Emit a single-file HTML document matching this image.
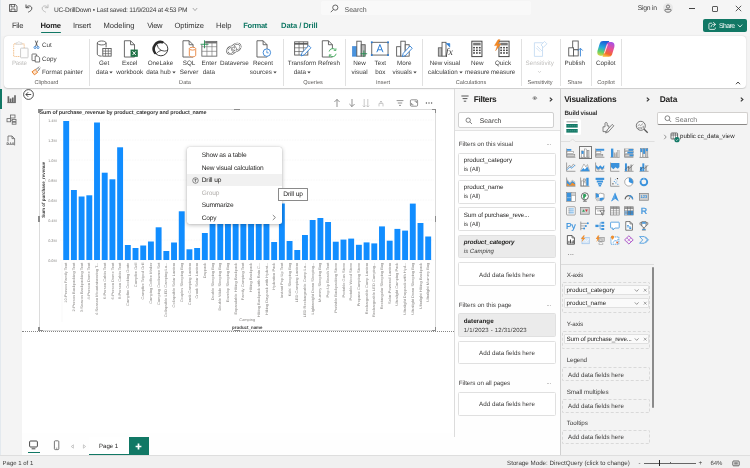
<!DOCTYPE html>
<html><head><meta charset="utf-8"><title>UC-DrillDown</title>
<style>
html,body{margin:0;padding:0;}
body{width:750px;height:468px;overflow:hidden;position:relative;background:#f3f3f3;font-family:"Liberation Sans",sans-serif;text-rendering:geometricPrecision;}
#root{position:absolute;left:0;top:0;width:750px;height:468px;overflow:hidden;will-change:transform;}
.t{position:absolute;white-space:nowrap;line-height:1;}
.b{position:absolute;}
svg{overflow:visible;}
</style></head><body><div id="root">
<div class="b" style="left:0px;top:0px;width:750px;height:36px;background:#f5f5f5"></div>
<div class="b" style="left:321px;top:1px;width:210px;height:14px;background:#f9f9f9;border-radius:2px"></div>
<svg class="b" style="left:330px;top:4px;" width="9" height="9" viewBox="0 0 9 9"><circle cx="5.3" cy="3.6" r="2.6" fill="none" stroke="#444" stroke-width="0.8"/><path d="M3.4 5.5 L0.8 8.2" stroke="#444" stroke-width="0.8" fill="none"/></svg>
<div class="t" style="left:344.5px;top:9.5px;font-size:7px;color:#555;font-weight:400;transform:translate(0,-50%);">Search</div>
<svg class="b" style="left:8px;top:3px;" width="10" height="10" viewBox="0 0 10 10"><path d="M1.5 1.5h5.8l1.7 1.7v5.3h-7.5z" fill="none" stroke="#444" stroke-width="0.8"/><path d="M3.2 1.5v2.4h3.4v-2.4M3 9v-3h4v3" fill="none" stroke="#444" stroke-width="0.8"/></svg>
<svg class="b" style="left:24px;top:3px;" width="10" height="10" viewBox="0 0 10 10"><path d="M2 1.5v3.2h3.2" fill="none" stroke="#444" stroke-width="0.9"/><path d="M2.2 4.5 C3.5 2.5 7 2.2 7.8 4.8 C8.3 7 6 8.3 4.2 9.2" fill="none" stroke="#444" stroke-width="0.9"/></svg>
<svg class="b" style="left:40px;top:3px;" width="10" height="10" viewBox="0 0 10 10"><path d="M8 1.5v3.2h-3.2" fill="none" stroke="#b5b5b5" stroke-width="0.9"/><path d="M7.8 4.5 C6.5 2.5 3 2.2 2.2 4.8 C1.7 7 4 8.3 5.8 9.2" fill="none" stroke="#b5b5b5" stroke-width="0.9"/></svg>
<div class="t" style="left:54px;top:11.1px;font-size:6.6px;color:#3b3b3b;font-weight:400;transform:translate(0,-50%);letter-spacing:-0.227px;">UC-DrillDown • Last saved: 11/9/2024 at 4:53 PM</div>
<svg class="b" style="left:191.5px;top:6.5px;" width="6" height="5" viewBox="0 0 6 5"><path d="M0.8 1 L3 3.6 L5.2 1" fill="none" stroke="#888" stroke-width="0.7"/></svg>
<div class="t" style="left:637.8px;top:9.4px;font-size:6.8px;color:#3b3b3b;font-weight:400;transform:translate(0,-50%);letter-spacing:-0.256px;">Sign in</div>
<div class="b" style="left:662.6px;top:2.9px;width:10.2px;height:10.2px;background:#e9e9e9;border-radius:50%"></div>
<svg class="b" style="left:663.7px;top:3.6px;" width="8" height="9" viewBox="0 0 8 9"><circle cx="4" cy="2.6" r="1.600" fill="none" stroke="#444" stroke-width="0.700"/><path d="M1.400 5.400h5.200c.5 0 .6.400.5.900C6.800 7.600 5.600 8.200 4 8.200S1.200 7.600.9 6.300c-.1-.5 0-.9.500-.9z" fill="none" stroke="#444" stroke-width="0.700"/></svg>
<div class="b" style="left:689px;top:8.45px;width:5.8px;height:0.55px;background:#444"></div>
<div class="b" style="left:712px;top:5.7px;width:6.3px;height:6.3px;border:0.6px solid #5a5a5a;border-radius:1px;box-sizing:border-box"></div>
<svg class="b" style="left:734.5px;top:5.2px;" width="7" height="7" viewBox="0 0 7 7"><path d="M0.8 0.8 L6.2 6.2 M6.2 0.8 L0.8 6.2" stroke="#333" stroke-width="0.8" fill="none"/></svg>
<div class="t" style="left:12px;top:25.8px;font-size:7.6px;color:#333;font-weight:400;transform:translate(0,-50%);letter-spacing:-0.287px;">File</div>
<div class="t" style="left:40.5px;top:25.8px;font-size:7.6px;color:#222;font-weight:700;transform:translate(0,-50%);letter-spacing:-0.204px;">Home</div>
<div class="t" style="left:73px;top:25.8px;font-size:7.6px;color:#333;font-weight:400;transform:translate(0,-50%);letter-spacing:-0.201px;">Insert</div>
<div class="t" style="left:103.5px;top:25.8px;font-size:7.6px;color:#333;font-weight:400;transform:translate(0,-50%);letter-spacing:0.007px;">Modeling</div>
<div class="t" style="left:147.3px;top:25.8px;font-size:7.6px;color:#333;font-weight:400;transform:translate(0,-50%);letter-spacing:-0.384px;">View</div>
<div class="t" style="left:174.5px;top:25.8px;font-size:7.6px;color:#333;font-weight:400;transform:translate(0,-50%);letter-spacing:-0.061px;">Optimize</div>
<div class="t" style="left:216px;top:25.8px;font-size:7.6px;color:#333;font-weight:400;transform:translate(0,-50%);letter-spacing:-0.033px;">Help</div>
<div class="t" style="left:243.3px;top:25.8px;font-size:7.6px;color:#117865;font-weight:700;transform:translate(0,-50%);letter-spacing:-0.326px;">Format</div>
<div class="t" style="left:281px;top:25.8px;font-size:7.6px;color:#117865;font-weight:700;transform:translate(0,-50%);letter-spacing:-0.082px;">Data / Drill</div>
<div class="b" style="left:41px;top:31.5px;width:20px;height:1.4px;background:#117865;border-radius:1px"></div>
<div class="b" style="left:702.5px;top:19px;width:44.5px;height:12.8px;background:#117865;border-radius:2px"></div>
<svg class="b" style="left:707px;top:20.5px;" width="10" height="10" viewBox="0 0 10 10"><path d="M5.2 2.2h-2.4c-.5 0-.9.4-.9.9v4.4c0 .5.4.9.9.9h4.6c.5 0 .9-.4.9-.9v-1" fill="none" stroke="#fff" stroke-width="0.8"/><path d="M6.2 1.2 L8.6 3.4 L6.2 5.6 M8.4 3.4 H6.6 C5 3.4 4.2 4.6 4 6.2" fill="none" stroke="#fff" stroke-width="0.8"/></svg>
<div class="t" style="left:719.1px;top:27.2px;font-size:6.9px;color:#fff;font-weight:400;transform:translate(0,-50%);letter-spacing:-0.603px;">Share</div>
<svg class="b" style="left:736.6px;top:22.8px;" width="6" height="6" viewBox="0 0 6 6"><path d="M0.8 1.6 L3 4 L5.2 1.6" fill="none" stroke="#fff" stroke-width="0.8"/></svg>
<div class="b" style="left:4px;top:36px;width:742px;height:52px;background:#fff;border-radius:4px;box-shadow:0 0.5px 1.5px rgba(0,0,0,0.18)"></div>
<div class="b" style="left:88.5px;top:38.5px;width:0.6px;height:47px;background:#e1e1e1"></div>
<div class="b" style="left:282.5px;top:38.5px;width:0.6px;height:47px;background:#e1e1e1"></div>
<div class="b" style="left:345px;top:38.5px;width:0.6px;height:47px;background:#e1e1e1"></div>
<div class="b" style="left:421.5px;top:38.5px;width:0.6px;height:47px;background:#e1e1e1"></div>
<div class="b" style="left:520.5px;top:38.5px;width:0.6px;height:47px;background:#e1e1e1"></div>
<div class="b" style="left:559.5px;top:38.5px;width:0.6px;height:47px;background:#e1e1e1"></div>
<div class="b" style="left:590.5px;top:38.5px;width:0.6px;height:47px;background:#e1e1e1"></div>
<div class="b" style="left:621px;top:38.5px;width:0.6px;height:47px;background:#e1e1e1"></div>
<div class="t" style="left:46.5px;top:84.0px;font-size:5.6px;color:#605e5c;font-weight:400;transform:translate(-50%,-50%);">Clipboard</div>
<div class="t" style="left:185px;top:84.0px;font-size:5.6px;color:#605e5c;font-weight:400;transform:translate(-50%,-50%);">Data</div>
<div class="t" style="left:313px;top:84.0px;font-size:5.6px;color:#605e5c;font-weight:400;transform:translate(-50%,-50%);">Queries</div>
<div class="t" style="left:383px;top:84.0px;font-size:5.6px;color:#605e5c;font-weight:400;transform:translate(-50%,-50%);">Insert</div>
<div class="t" style="left:471px;top:84.0px;font-size:5.6px;color:#605e5c;font-weight:400;transform:translate(-50%,-50%);">Calculations</div>
<div class="t" style="left:540px;top:84.0px;font-size:5.6px;color:#605e5c;font-weight:400;transform:translate(-50%,-50%);">Sensitivity</div>
<div class="t" style="left:575px;top:84.0px;font-size:5.6px;color:#605e5c;font-weight:400;transform:translate(-50%,-50%);">Share</div>
<div class="t" style="left:606px;top:84.0px;font-size:5.6px;color:#605e5c;font-weight:400;transform:translate(-50%,-50%);">Copilot</div>
<svg class="b" style="left:735px;top:80px;" width="6" height="6" viewBox="0 0 6 6"><path d="M1 4.2 L3 2 L5 4.2" fill="none" stroke="#333" stroke-width="0.9"/></svg>
<svg class="b" style="left:11.8px;top:39.6px;" width="18.7" height="19.8" viewBox="0 0 17 18"><rect x="1.500" y="3.500" width="9.600" height="11.500" rx="0.800" fill="none" stroke="#f3c596" stroke-width="1" stroke-dasharray="1.100 0.500"/>
<path d="M3.600 3.800 V2.600 H5 L6.300 1.300 L7.600 2.600 H9 V3.800z" fill="#fff" stroke="#cfcfcf" stroke-width="0.700"/>
<rect x="7.800" y="7.400" width="6.800" height="8.800" rx="0.600" fill="#fdfdfd" stroke="#c6c6c6" stroke-width="0.800"/></svg>
<div class="t" style="left:19.3px;top:63.8px;font-size:6.3px;color:#c0bfbd;font-weight:400;transform:translate(-50%,-50%);letter-spacing:-0.262px;">Paste</div>
<svg class="b" style="left:32px;top:39.8px;" width="9" height="10" viewBox="0 0 9 10"><path d="M3.300 0.600 L5.500 6.400 M5.700 0.600 L3.500 6.400" stroke="#444" stroke-width="0.800" fill="none"/><circle cx="3" cy="7.500" r="1.050" fill="none" stroke="#2b7cd3" stroke-width="0.800"/><circle cx="6" cy="7.500" r="1.050" fill="none" stroke="#2b7cd3" stroke-width="0.800"/></svg>
<div class="t" style="left:42px;top:45.9px;font-size:6.3px;color:#3a3a3a;font-weight:400;transform:translate(0,-50%);">Cut</div>
<svg class="b" style="left:31px;top:53px;" width="10" height="10" viewBox="0 0 10 10"><rect x="1" y="1" width="4.6" height="6.6" rx="0.5" fill="#fff" stroke="#555" stroke-width="0.8"/><path d="M4.2 3h2.6l1.8 1.8v4.2h-4.4z" fill="#fff" stroke="#555" stroke-width="0.8"/></svg>
<div class="t" style="left:42px;top:59.8px;font-size:6.3px;color:#3a3a3a;font-weight:400;transform:translate(0,-50%);">Copy</div>
<svg class="b" style="left:31px;top:66px;" width="10" height="10" viewBox="0 0 10 10"><path d="M1 5.800 L4.400 3.400 L6.600 6.400 L3.400 8.800z" fill="#fde3cb" stroke="#e8761a" stroke-width="0.900"/><path d="M4.800 3.600 L7.200 1.600 L8.600 2.800 L6.600 5.400" fill="#fff" stroke="#444" stroke-width="0.700"/><path d="M7.600 1.200l.8-.6M8.800 2.200l.7-.5" stroke="#444" stroke-width="0.500"/></svg>
<div class="t" style="left:42px;top:73.4px;font-size:6.3px;color:#3a3a3a;font-weight:400;transform:translate(0,-50%);">Format painter</div>
<svg class="b" style="left:94.3px;top:39.4px;" width="19.8" height="19.8" viewBox="0 0 18 18"><path d="M3 3.6v10.2c0 1 1.8 1.8 4 1.8M3 3.6c0-1 1.8-1.8 4-1.8s4 .8 4 1.8-1.8 1.8-4 1.8-4-.8-4-1.8zM11 3.6v4" stroke="#555" stroke-width="0.8" fill="none"/><rect x="8" y="8.6" width="7.6" height="7" fill="#fff" stroke="#555" stroke-width="0.8"/><path d="M8 11h7.6M8 13.3h7.6M10.5 8.6v7M13 8.6v7" stroke="#555" stroke-width="0.6"/></svg>
<div class="t" style="left:104.2px;top:63.8px;font-size:6.3px;color:#3a3a3a;font-weight:400;transform:translate(-50%,-50%);">Get</div>
<div class="t" style="left:95.97px;top:72.6px;font-size:6.3px;color:#3a3a3a;font-weight:400;transform:translate(0,-50%);">data</div>
<svg class="b" style="left:109.43px;top:70.6px;" width="4" height="3" viewBox="0 0 4 3"><path d="M0.3 0.5h3.400L2 2.600z" fill="#444"/></svg>
<svg class="b" style="left:119.9px;top:39.4px;" width="19.8" height="19.8" viewBox="0 0 18 18"><path d="M4 1.6h5.6l3.6 3.6v11.2H4z" fill="#fff" stroke="#555" stroke-width="0.8"/><path d="M9.6 1.6v3.6h3.6" stroke="#555" stroke-width="0.8" fill="none"/><rect x="9.6" y="9.6" width="6.6" height="6.6" fill="#1e7145"/><path d="M11.4 11.2l3 3.4M14.4 11.2l-3 3.4" stroke="#fff" stroke-width="0.9"/></svg>
<div class="t" style="left:129.8px;top:63.8px;font-size:6.3px;color:#3a3a3a;font-weight:400;transform:translate(-50%,-50%);">Excel</div>
<div class="t" style="left:129.8px;top:72.6px;font-size:6.3px;color:#3a3a3a;font-weight:400;transform:translate(-50%,-50%);">workbook</div>
<svg class="b" style="left:150.9px;top:39.0px;" width="19.8" height="19.8" viewBox="0 0 18 18"><circle cx="9" cy="9" r="6.300" fill="none" stroke="#3a3a3a" stroke-width="0.900"/><path d="M3.600 12.600A6.300 6.300 0 0 1 10.400 2.900" fill="none" stroke="#2a2a2a" stroke-width="2.300" stroke-linecap="round"/><path d="M5.600 5.200c.6 3.400 3 5.600 6.600 5.800 1.400 0 2.400-.4 3-1" fill="none" stroke="#3a3a3a" stroke-width="0.800"/><path d="M4.800 13.400c1.400-1.800 3-2.800 5-3" fill="none" stroke="#3a3a3a" stroke-width="0.800"/></svg>
<div class="t" style="left:160.5px;top:63.8px;font-size:6.3px;color:#3a3a3a;font-weight:400;transform:translate(-50%,-50%);">OneLake</div>
<div class="t" style="left:146.14px;top:72.6px;font-size:6.3px;color:#3a3a3a;font-weight:400;transform:translate(0,-50%);">data hub</div>
<svg class="b" style="left:171.86px;top:70.6px;" width="4" height="3" viewBox="0 0 4 3"><path d="M0.3 0.5h3.400L2 2.600z" fill="#444"/></svg>
<svg class="b" style="left:179.1px;top:39.4px;" width="19.8" height="19.8" viewBox="0 0 18 18"><path d="M3.6 1.6h5.6l3.6 3.6v11.2H3.6z" fill="#fff" stroke="#555" stroke-width="0.8"/><path d="M9.2 1.6v3.6h3.6" stroke="#555" stroke-width="0.8" fill="none"/><path d="M9.4 8.8v6c0 .8 1.3 1.4 2.9 1.4s2.9-.6 2.9-1.4v-6" fill="#fff" stroke="#e8823a" stroke-width="0.8"/><ellipse cx="12.3" cy="8.8" rx="2.9" ry="1.3" fill="#fff" stroke="#e8823a" stroke-width="0.8"/></svg>
<div class="t" style="left:189px;top:63.8px;font-size:6.3px;color:#3a3a3a;font-weight:400;transform:translate(-50%,-50%);">SQL</div>
<div class="t" style="left:189px;top:72.6px;font-size:6.3px;color:#3a3a3a;font-weight:400;transform:translate(-50%,-50%);">Server</div>
<svg class="b" style="left:199.4px;top:38.7px;" width="19.8" height="19.8" viewBox="0 0 18 18"><rect x="2.600" y="2.200" width="13.600" height="13.400" fill="#fff" stroke="#666" stroke-width="0.800"/><path d="M2.600 3.400h13.600" stroke="#666" stroke-width="1.200"/><path d="M2.600 7h13.600M2.600 11.200h13.600M7.200 2.200v13.400M11.800 2.200v13.400" stroke="#777" stroke-width="0.600"/><rect x="1.6" y="1.2" width="4" height="4" fill="#fff"/><path d="M2.600 6.800v8.800M6.800 2.200h9.400" stroke="#666" stroke-width="0"/><path d="M5 1.200v7.200M1.400 4.800h7.200" stroke="#1e8a4c" stroke-width="0.800"/></svg>
<div class="t" style="left:209px;top:63.8px;font-size:6.3px;color:#3a3a3a;font-weight:400;transform:translate(-50%,-50%);">Enter</div>
<div class="t" style="left:209px;top:72.6px;font-size:6.3px;color:#3a3a3a;font-weight:400;transform:translate(-50%,-50%);">data</div>
<svg class="b" style="left:225.48px;top:40.48px;" width="17.64" height="17.64" viewBox="0 0 18 18"><g fill="none"><ellipse cx="6.600" cy="10.400" rx="4.700" ry="3.500" transform="rotate(-30 6.600 10.400)" stroke="#5a5a5a" stroke-width="2.000"/><ellipse cx="11.400" cy="7.600" rx="4.700" ry="3.500" transform="rotate(-30 11.400 7.600)" stroke="#5a5a5a" stroke-width="2.000"/><ellipse cx="6.600" cy="10.400" rx="4.700" ry="3.500" transform="rotate(-30 6.600 10.400)" stroke="#fff" stroke-width="0.900"/><ellipse cx="11.400" cy="7.600" rx="4.700" ry="3.500" transform="rotate(-30 11.400 7.600)" stroke="#fff" stroke-width="0.900"/></g></svg>
<div class="t" style="left:234.3px;top:63.8px;font-size:6.3px;color:#3a3a3a;font-weight:400;transform:translate(-50%,-50%);">Dataverse</div>
<svg class="b" style="left:253.1px;top:39.4px;" width="19.8" height="19.8" viewBox="0 0 18 18"><path d="M3.6 1.6h5.6l3.6 3.6v11.2H3.6z" fill="#fff" stroke="#555" stroke-width="0.8"/><path d="M9.2 1.6v3.6h3.6" stroke="#555" stroke-width="0.8" fill="none"/><circle cx="12.6" cy="12.4" r="3.4" fill="#fff" stroke="#2b7cd3" stroke-width="0.8"/><path d="M12.6 10.4v2.2h1.6" stroke="#2b7cd3" stroke-width="0.7" fill="none"/></svg>
<div class="t" style="left:263px;top:63.8px;font-size:6.3px;color:#3a3a3a;font-weight:400;transform:translate(-50%,-50%);">Recent</div>
<div class="t" style="left:249.87px;top:72.6px;font-size:6.3px;color:#3a3a3a;font-weight:400;transform:translate(0,-50%);">sources</div>
<svg class="b" style="left:273.13px;top:70.6px;" width="4" height="3" viewBox="0 0 4 3"><path d="M0.3 0.5h3.400L2 2.600z" fill="#444"/></svg>
<svg class="b" style="left:292.1px;top:39.4px;" width="19.8" height="19.8" viewBox="0 0 18 18"><rect x="2.4" y="2.6" width="12" height="12" fill="#fff" stroke="#555" stroke-width="0.8"/><path d="M2.400 4.400h12" stroke="#555" stroke-width="1.4"/><path d="M2.400 8h12M2.400 11.400h12M6.400 2.600v12M10.400 2.600v12" stroke="#555" stroke-width="0.6"/><path d="M8.200 15.400l1-3 6-6.400 2 2-6.200 6.400z" fill="#fff" stroke="#2b7cd3" stroke-width="0.8"/></svg>
<div class="t" style="left:302px;top:63.8px;font-size:6.3px;color:#3a3a3a;font-weight:400;transform:translate(-50%,-50%);">Transform</div>
<div class="t" style="left:293.77px;top:72.6px;font-size:6.3px;color:#3a3a3a;font-weight:400;transform:translate(0,-50%);">data</div>
<svg class="b" style="left:307.23px;top:70.6px;" width="4" height="3" viewBox="0 0 4 3"><path d="M0.3 0.5h3.400L2 2.600z" fill="#444"/></svg>
<svg class="b" style="left:319.1px;top:39.4px;" width="19.8" height="19.8" viewBox="0 0 18 18"><path d="M3 1.600h5.600l3.600 3.600v11.200H3z" fill="#fff" stroke="#555" stroke-width="0.8"/><path d="M8.600 1.600v3.600h3.600" stroke="#555" stroke-width="0.8" fill="none"/><circle cx="12.400" cy="12.400" r="3.800" fill="#fff" stroke="none"/><path d="M9.200 11.400a3.300 3.300 0 0 1 6-1.200M15.600 13.400a3.300 3.300 0 0 1-6 1.200" fill="none" stroke="#3aa655" stroke-width="0.8"/><path d="M15.400 8.400v2h-2M9.400 16.400v-2h2" fill="none" stroke="#3aa655" stroke-width="0.7"/></svg>
<div class="t" style="left:329px;top:63.8px;font-size:6.3px;color:#3a3a3a;font-weight:400;transform:translate(-50%,-50%);">Refresh</div>
<svg class="b" style="left:349.6px;top:39.4px;" width="19.8" height="19.8" viewBox="0 0 18 18"><rect x="2.400" y="7" width="3.800" height="8.600" fill="#4a94de" stroke="#2b7cd3" stroke-width="0.6"/><rect x="6.200" y="2" width="4" height="13.600" fill="#fff" stroke="#555" stroke-width="0.8"/><rect x="10.200" y="5.200" width="3.600" height="10.400" fill="#bbb" stroke="#555" stroke-width="0.8"/><path d="M12.600 10.400v6M9.600 13.400h6" stroke="#1e8a4c" stroke-width="0.8"/></svg>
<div class="t" style="left:359.5px;top:63.8px;font-size:6.3px;color:#3a3a3a;font-weight:400;transform:translate(-50%,-50%);">New</div>
<div class="t" style="left:359.5px;top:72.6px;font-size:6.3px;color:#3a3a3a;font-weight:400;transform:translate(-50%,-50%);">visual</div>
<svg class="b" style="left:370.4px;top:39.4px;" width="19.8" height="19.8" viewBox="0 0 18 18"><rect x="1.600" y="3" width="14.800" height="11.600" fill="#fff" stroke="#555" stroke-width="0.8"/><rect x="0.8" y="2.2" width="1.6" height="1.6" fill="#2b7cd3"/><rect x="15.600" y="2.200" width="1.600" height="1.600" fill="#2b7cd3"/><rect x="0.800" y="13.800" width="1.600" height="1.600" fill="#2b7cd3"/><rect x="15.600" y="13.800" width="1.600" height="1.600" fill="#2b7cd3"/><path d="M6.200 12l2.800-7 2.800 7M7.200 9.800h3.600" fill="none" stroke="#2b7cd3" stroke-width="0.9"/></svg>
<div class="t" style="left:380.3px;top:63.8px;font-size:6.3px;color:#3a3a3a;font-weight:400;transform:translate(-50%,-50%);">Text</div>
<div class="t" style="left:380.3px;top:72.6px;font-size:6.3px;color:#3a3a3a;font-weight:400;transform:translate(-50%,-50%);">box</div>
<svg class="b" style="left:394.4px;top:39.4px;" width="19.8" height="19.8" viewBox="0 0 18 18"><rect x="2.400" y="7" width="3.800" height="8.600" fill="#fff" stroke="#555" stroke-width="0.800"/><rect x="6.200" y="2" width="4" height="13.600" fill="#fff" stroke="#555" stroke-width="0.800"/><rect x="10.200" y="5.200" width="3.600" height="10.400" fill="#fff" stroke="#555" stroke-width="0.800"/><path d="M7.600 16l.8-3 6.200-6.600 2 2-6.200 6.600z" fill="#fff" stroke="#2b7cd3" stroke-width="0.8"/></svg>
<div class="t" style="left:404.3px;top:63.8px;font-size:6.3px;color:#3a3a3a;font-weight:400;transform:translate(-50%,-50%);">More</div>
<div class="t" style="left:392.57px;top:72.6px;font-size:6.3px;color:#3a3a3a;font-weight:400;transform:translate(0,-50%);">visuals</div>
<svg class="b" style="left:413.03px;top:70.6px;" width="4" height="3" viewBox="0 0 4 3"><path d="M0.3 0.5h3.400L2 2.600z" fill="#444"/></svg>
<svg class="b" style="left:435.1px;top:39.4px;" width="19.8" height="19.8" viewBox="0 0 18 18"><rect x="3" y="8" width="3.400" height="7.600" fill="#bbb" stroke="#555" stroke-width="0.700"/><rect x="6.400" y="3" width="3.600" height="12.600" fill="#fff" stroke="#555" stroke-width="0.800"/><path d="M10 4.200h3.400v3.400" fill="#2b7cd3" stroke="#2b7cd3" stroke-width="0.6"/><text x="9.800" y="15" font-family="Liberation Serif,serif" font-style="italic" font-size="9" fill="#333">fx</text></svg>
<div class="t" style="left:445px;top:63.8px;font-size:6.3px;color:#3a3a3a;font-weight:400;transform:translate(-50%,-50%);">New visual</div>
<div class="t" style="left:428.02px;top:72.6px;font-size:6.3px;color:#3a3a3a;font-weight:400;transform:translate(0,-50%);">calculation</div>
<svg class="b" style="left:458.98px;top:70.6px;" width="4" height="3" viewBox="0 0 4 3"><path d="M0.3 0.5h3.400L2 2.600z" fill="#444"/></svg>
<svg class="b" style="left:467.4px;top:39.4px;" width="19.8" height="19.8" viewBox="0 0 18 18"><rect x="4.400" y="2" width="9.200" height="14" fill="#fff" stroke="#444" stroke-width="0.9"/><rect x="5.600" y="3.400" width="6.800" height="2.400" fill="#777"/><g fill="#444"><rect x="5.6" y="7.2" width="1.6" height="1.4"/><rect x="8.200" y="7.200" width="1.600" height="1.400"/><rect x="10.800" y="7.200" width="1.600" height="1.400"/><rect x="5.600" y="9.600" width="1.600" height="1.400"/><rect x="8.200" y="9.600" width="1.600" height="1.400"/><rect x="10.800" y="9.600" width="1.600" height="1.400"/><rect x="5.600" y="12" width="1.600" height="1.400"/><rect x="8.200" y="12" width="1.600" height="1.400"/><rect x="10.800" y="12" width="1.600" height="1.400"/></g></svg>
<div class="t" style="left:477.3px;top:63.8px;font-size:6.3px;color:#3a3a3a;font-weight:400;transform:translate(-50%,-50%);">New</div>
<div class="t" style="left:477.3px;top:72.6px;font-size:6.3px;color:#3a3a3a;font-weight:400;transform:translate(-50%,-50%);">measure</div>
<svg class="b" style="left:493.1px;top:39.4px;" width="19.8" height="19.8" viewBox="0 0 18 18"><rect x="5.400" y="2" width="9.200" height="14" fill="#fff" stroke="#444" stroke-width="0.9"/><rect x="6.600" y="3.400" width="6.800" height="2.400" fill="#777"/><g fill="#444"><rect x="6.600" y="7.200" width="1.600" height="1.400"/><rect x="9.200" y="7.200" width="1.600" height="1.400"/><rect x="11.800" y="7.200" width="1.600" height="1.400"/><rect x="6.600" y="9.600" width="1.600" height="1.400"/><rect x="9.200" y="9.600" width="1.600" height="1.400"/><rect x="11.800" y="9.600" width="1.600" height="1.400"/><rect x="6.600" y="12" width="1.600" height="1.400"/><rect x="9.200" y="12" width="1.600" height="1.400"/><rect x="11.800" y="12" width="1.600" height="1.400"/></g><path d="M4.600 0.600L1.400 6h2.600L2.400 10.600 7 4.600H4.200L6.400 0.600z" fill="#f58a1f" stroke="#e8761a" stroke-width="0.4"/></svg>
<div class="t" style="left:503px;top:63.8px;font-size:6.3px;color:#3a3a3a;font-weight:400;transform:translate(-50%,-50%);">Quick</div>
<div class="t" style="left:503px;top:72.6px;font-size:6.3px;color:#3a3a3a;font-weight:400;transform:translate(-50%,-50%);">measure</div>
<svg class="b" style="left:529.9px;top:39.4px;" width="19.8" height="19.8" viewBox="0 0 18 18"><path d="M4 3.400h7.400v12.400H4z" fill="#fff" stroke="#c5dcf3" stroke-width="0.8"/><path d="M6.400 6.400l4.600 4.600M5.600 8l3.600 3.600" stroke="#c5dcf3" stroke-width="0.7"/><path d="M10 5.400l3.200-3.200 2.200 2.200-3.200 3.200z" fill="#fff" stroke="#c5dcf3" stroke-width="0.8"/></svg>
<div class="t" style="left:539.8px;top:63.8px;font-size:6.3px;color:#c0bfbd;font-weight:400;transform:translate(-50%,-50%);">Sensitivity</div>
<svg class="b" style="left:537.3px;top:69.5px;" width="5" height="4" viewBox="0 0 5 4"><path d="M1 1l1.500 1.600L4 1" fill="none" stroke="#c0bfbd" stroke-width="0.6"/></svg>
<svg class="b" style="left:564.9px;top:39.4px;" width="19.8" height="19.8" viewBox="0 0 18 18"><rect x="7" y="1.800" width="5" height="8" fill="#fff" stroke="#555" stroke-width="0.800"/><rect x="3.400" y="8" width="4.400" height="7.400" fill="#fff" stroke="#555" stroke-width="0.800"/><rect x="7.800" y="9.800" width="4.200" height="5.600" fill="#fff" stroke="#555" stroke-width="0.800"/><path d="M14 15.800v-7M11.800 10.600L14 8.400l2.200 2.200" fill="none" stroke="#2b7cd3" stroke-width="0.800"/></svg>
<div class="t" style="left:574.8px;top:63.8px;font-size:6.3px;color:#3a3a3a;font-weight:400;transform:translate(-50%,-50%);">Publish</div>
<svg class="b" style="left:596.3px;top:38.7px;" width="19.8" height="19.8" viewBox="0 0 18 18"><defs><linearGradient id="cg1" x1="0.3" y1="0" x2="0.1" y2="1"><stop offset="0" stop-color="#1b63d8"/><stop offset="0.4" stop-color="#25a9dc"/><stop offset="0.7" stop-color="#5fcf6a"/><stop offset="1" stop-color="#e6d53a"/></linearGradient><linearGradient id="cg2" x1="0.7" y1="0" x2="0.4" y2="1"><stop offset="0" stop-color="#a650e6"/><stop offset="0.45" stop-color="#ea4f93"/><stop offset="0.8" stop-color="#f3672e"/><stop offset="1" stop-color="#f7b43c"/></linearGradient></defs><path d="M1.300 10.800L3.400 4Q4 1.800 6.400 1.800H12L8.400 13.400Q7.800 15.200 5.600 15.200H3.800Q0.600 14.800 1.300 10.800z" fill="url(#cg1)"/><path d="M16.700 7.200L14.600 14Q14 16.200 11.600 16.200H6L9.600 4.600Q10.200 2.800 12.400 2.800H14.200Q17.400 3.200 16.700 7.200z" fill="url(#cg2)"/><path d="M10.300 5.200L7.700 12.800" stroke="#fff" stroke-width="0.8" stroke-linecap="round"/></svg>
<div class="t" style="left:605.8px;top:63.8px;font-size:6.3px;color:#3a3a3a;font-weight:400;transform:translate(-50%,-50%);">Copilot</div>
<div class="b" style="left:0px;top:88.5px;width:750px;height:380px;background:#f3f3f3;z-index:-2"></div>
<div class="b" style="left:0px;top:89px;width:22px;height:367px;background:#f4f4f4;z-index:-1"></div>
<div class="b" style="left:0px;top:0px;width:1px;height:456px;background:#e3e9ee"></div>
<div class="b" style="left:0px;top:88.7px;width:2.2px;height:20.3px;background:#117865"></div>
<svg class="b" style="left:5.5px;top:92.6px;" width="11" height="11" viewBox="0 0 11 11"><path d="M1.400 9.600h8.400" stroke="#5a5a5a" stroke-width="0.9" fill="none"/><path d="M2.400 9.600v-6.400M4.600 9.600v-4M6.800 9.600v-5.200M9 9.600v-7.400" stroke="#666" stroke-width="1.700" fill="none"/></svg>
<svg class="b" style="left:5.5px;top:114px;" width="11" height="11" viewBox="0 0 11 11"><rect x="4.400" y="1" width="4.600" height="3" stroke="#666" stroke-width="0.8" fill="none"/><rect x="1" y="4.600" width="3.600" height="3.200" stroke="#666" stroke-width="0.8" fill="none"/><rect x="6.200" y="5.400" width="3.800" height="2" stroke="#666" stroke-width="0.8" fill="none"/><rect x="6.200" y="8.200" width="3.800" height="2" stroke="#666" stroke-width="0.8" fill="none"/><path d="M4.600 6.200h1.600" stroke="#666" stroke-width="0.8" fill="none"/></svg>
<svg class="b" style="left:5.5px;top:135px;" width="11" height="11" viewBox="0 0 11 11"><path d="M2 6.400V1h4l2.600 2.600v6.800" stroke="#666" stroke-width="0.8" fill="none"/><path d="M6 1v2.600h2.600" stroke="#666" stroke-width="0.8" fill="none"/><text x="0.600" y="10" font-size="3.600" font-weight="700" font-family="Liberation Sans,sans-serif" fill="#444">DAX</text></svg>
<div class="b" style="left:22px;top:89px;width:432px;height:344px;background:#fff;z-index:-1"></div>
<svg class="b" style="left:22.9px;top:89.0px;" width="11" height="11" viewBox="0 0 11 11"><circle cx="5.500" cy="5.500" r="4.900" fill="none" stroke="#222" stroke-width="0.800"/><path d="M8.200 5.500H3M5.200 3.200L2.900 5.500l2.300 2.300" fill="none" stroke="#222" stroke-width="0.800"/></svg>
<div class="b" style="left:22px;top:331.2px;width:432px;height:0px;border-top:1px dotted #858585"></div>
<svg class="b" style="left:332px;top:97.5px;" width="10" height="10" viewBox="0 0 10 10"><path d="M5 9V1.400M2.400 4L5 1.400 7.600 4" fill="none" stroke="#666" stroke-width="0.7"/></svg>
<svg class="b" style="left:346.5px;top:97.5px;" width="10" height="10" viewBox="0 0 10 10"><path d="M5 1v7.600M2.400 6L5 8.600 7.600 6" fill="none" stroke="#666" stroke-width="0.7"/></svg>
<svg class="b" style="left:361px;top:97.5px;" width="10" height="10" viewBox="0 0 10 10"><path d="M3.200 1v8M6.800 1v8M1.800 7.600L3.200 9l1.400-1.400M5.400 7.600L6.800 9l1.400-1.400" fill="none" stroke="#bbb" stroke-width="0.800"/></svg>
<svg class="b" style="left:375.5px;top:97.5px;" width="10" height="10" viewBox="0 0 10 10"><path d="M5 3v2.400M5 5.400H3v3M5 5.400h2v3M3.800 4.200L5 3l1.200 1.200" fill="none" stroke="#bbb" stroke-width="0.800"/></svg>
<svg class="b" style="left:394.5px;top:97.5px;" width="10" height="10" viewBox="0 0 10 10"><path d="M1.600 2.600h6.800M2.800 5h4.400M4 7.400h2" fill="none" stroke="#666" stroke-width="0.7"/></svg>
<svg class="b" style="left:409px;top:97.5px;" width="10" height="10" viewBox="0 0 10 10"><rect x="1.400" y="1.800" width="7.200" height="6.400" rx="1" fill="none" stroke="#666" stroke-width="0.7"/><path d="M5.600 3.200h1.800v1.800M4.400 6.800H2.600V5" fill="none" stroke="#666" stroke-width="0.7"/></svg>
<svg class="b" style="left:424px;top:97.5px;" width="10" height="10" viewBox="0 0 10 10"><circle cx="2.400" cy="5" r="0.700" fill="#555"/><circle cx="5" cy="5" r="0.700" fill="#555"/><circle cx="7.600" cy="5" r="0.700" fill="#555"/></svg>
<div class="b" style="left:38.5px;top:109px;width:397.5px;height:222px;border:0.6px solid #dcdcdc;box-sizing:border-box"></div>
<div class="b" style="left:38.3px;top:108.7px;width:4.4px;height:1.5px;background:#8c8c8c"></div>
<div class="b" style="left:38.3px;top:108.7px;width:1.5px;height:4.4px;background:#8c8c8c"></div>
<div class="b" style="left:431.9px;top:108.7px;width:4.4px;height:1.5px;background:#8c8c8c"></div>
<div class="b" style="left:434.8px;top:108.7px;width:1.5px;height:4.4px;background:#8c8c8c"></div>
<div class="b" style="left:38.3px;top:329.6px;width:4.4px;height:1.5px;background:#8c8c8c"></div>
<div class="b" style="left:38.3px;top:326.7px;width:1.5px;height:4.4px;background:#8c8c8c"></div>
<div class="b" style="left:431.9px;top:329.6px;width:4.4px;height:1.5px;background:#8c8c8c"></div>
<div class="b" style="left:434.8px;top:326.7px;width:1.5px;height:4.4px;background:#8c8c8c"></div>
<div class="b" style="left:234px;top:108.7px;width:6.4px;height:1.5px;background:#8c8c8c"></div>
<div class="b" style="left:234px;top:329.6px;width:6.4px;height:1.5px;background:#8c8c8c"></div>
<div class="b" style="left:38.3px;top:216px;width:1.5px;height:6.4px;background:#8c8c8c"></div>
<div class="b" style="left:434.8px;top:216px;width:1.5px;height:6.4px;background:#8c8c8c"></div>
<div class="t" style="left:39.6px;top:113.5px;font-size:5.4px;color:#3c3c3c;font-weight:700;transform:translate(0,-50%);letter-spacing:-0.087px;">Sum of purchase_revenue by product_category and product_name</div>
<svg class="b" style="left:0;top:0;font-family:'Liberation Sans',sans-serif" width="460" height="340" viewBox="0 0 460 340"><g font-family="Liberation Sans, sans-serif"><line x1="60" x2="434" y1="260.00" y2="260.00" stroke="#ececec" stroke-width="0.5" stroke-dasharray="0.8 0.8"/><text x="56.6" y="261.70" text-anchor="end" font-size="3.8" textLength="8.4" fill="#8a8886">0.0M</text><line x1="60" x2="434" y1="240.00" y2="240.00" stroke="#ececec" stroke-width="0.5" stroke-dasharray="0.8 0.8"/><text x="56.6" y="241.70" text-anchor="end" font-size="3.8" textLength="8.4" fill="#8a8886">0.2M</text><line x1="60" x2="434" y1="220.00" y2="220.00" stroke="#ececec" stroke-width="0.5" stroke-dasharray="0.8 0.8"/><text x="56.6" y="221.70" text-anchor="end" font-size="3.8" textLength="8.4" fill="#8a8886">0.4M</text><line x1="60" x2="434" y1="200.00" y2="200.00" stroke="#ececec" stroke-width="0.5" stroke-dasharray="0.8 0.8"/><text x="56.6" y="201.70" text-anchor="end" font-size="3.8" textLength="8.4" fill="#8a8886">0.6M</text><line x1="60" x2="434" y1="180.00" y2="180.00" stroke="#ececec" stroke-width="0.5" stroke-dasharray="0.8 0.8"/><text x="56.6" y="181.70" text-anchor="end" font-size="3.8" textLength="8.4" fill="#8a8886">0.8M</text><line x1="60" x2="434" y1="160.00" y2="160.00" stroke="#ececec" stroke-width="0.5" stroke-dasharray="0.8 0.8"/><text x="56.6" y="161.70" text-anchor="end" font-size="3.8" textLength="8.4" fill="#8a8886">1.0M</text><line x1="60" x2="434" y1="140.00" y2="140.00" stroke="#ececec" stroke-width="0.5" stroke-dasharray="0.8 0.8"/><text x="56.6" y="141.70" text-anchor="end" font-size="3.8" textLength="8.4" fill="#8a8886">1.2M</text><line x1="60" x2="434" y1="120.00" y2="120.00" stroke="#ececec" stroke-width="0.5" stroke-dasharray="0.8 0.8"/><text x="56.6" y="121.70" text-anchor="end" font-size="3.8" textLength="8.4" fill="#8a8886">1.4M</text><rect x="63.25" y="121.00" width="5.9" height="139.00" fill="#118DFF"/><text transform="translate(67.30,262.700) rotate(-90)" text-anchor="end" font-size="3.7" textLength="40.03" lengthAdjust="spacingAndGlyphs" fill="#8a8886">10-Person Family Tent</text><rect x="70.95" y="190.00" width="5.9" height="70.00" fill="#118DFF"/><text transform="translate(75.00,262.700) rotate(-90)" text-anchor="end" font-size="3.7" textLength="48.73" lengthAdjust="spacingAndGlyphs" fill="#8a8886">2-Person Backpacking Tent</text><rect x="78.65" y="196.50" width="5.9" height="63.50" fill="#118DFF"/><text transform="translate(82.70,262.700) rotate(-90)" text-anchor="end" font-size="3.7" textLength="49.63" lengthAdjust="spacingAndGlyphs" fill="#8a8886">3-Season Backpacking Tent</text><rect x="86.36" y="195.30" width="5.9" height="64.70" fill="#118DFF"/><text transform="translate(90.41,262.700) rotate(-90)" text-anchor="end" font-size="3.7" textLength="36.69" lengthAdjust="spacingAndGlyphs" fill="#8a8886">4-Person Dome Tent</text><rect x="94.06" y="122.50" width="5.9" height="137.50" fill="#118DFF"/><text transform="translate(98.11,262.700) rotate(-90)" text-anchor="end" font-size="3.7" textLength="52.30" lengthAdjust="spacingAndGlyphs" fill="#8a8886">4-Season Mountaineering T...</text><rect x="101.76" y="172.70" width="5.9" height="87.30" fill="#118DFF"/><text transform="translate(105.81,262.700) rotate(-90)" text-anchor="end" font-size="3.7" textLength="36.48" lengthAdjust="spacingAndGlyphs" fill="#8a8886">6-Person Cabin Tent</text><rect x="109.46" y="179.30" width="5.9" height="80.70" fill="#118DFF"/><text transform="translate(113.51,262.700) rotate(-90)" text-anchor="end" font-size="3.7" textLength="36.69" lengthAdjust="spacingAndGlyphs" fill="#8a8886">6-Person Dome Tent</text><rect x="117.16" y="147.30" width="5.9" height="112.70" fill="#118DFF"/><text transform="translate(121.21,262.700) rotate(-90)" text-anchor="end" font-size="3.7" textLength="36.48" lengthAdjust="spacingAndGlyphs" fill="#8a8886">8-Person Cabin Tent</text><rect x="124.87" y="245.00" width="5.9" height="15.00" fill="#118DFF"/><text transform="translate(128.92,262.700) rotate(-90)" text-anchor="end" font-size="3.7" textLength="43.23" lengthAdjust="spacingAndGlyphs" fill="#8a8886">Campfire Cooking Grate</text><rect x="132.57" y="248.00" width="5.9" height="12.00" fill="#118DFF"/><text transform="translate(136.62,262.700) rotate(-90)" text-anchor="end" font-size="3.7" textLength="24.50" lengthAdjust="spacingAndGlyphs" fill="#8a8886">Campfire Grill</text><rect x="140.27" y="245.50" width="5.9" height="14.50" fill="#118DFF"/><text transform="translate(144.32,262.700) rotate(-90)" text-anchor="end" font-size="3.7" textLength="36.76" lengthAdjust="spacingAndGlyphs" fill="#8a8886">Campfire Tripod Grill</text><rect x="147.97" y="241.50" width="5.9" height="18.50" fill="#118DFF"/><text transform="translate(152.02,262.700) rotate(-90)" text-anchor="end" font-size="3.7" textLength="41.15" lengthAdjust="spacingAndGlyphs" fill="#8a8886">Camping Coffee Maker</text><rect x="155.67" y="227.30" width="5.9" height="32.70" fill="#118DFF"/><text transform="translate(159.72,262.700) rotate(-90)" text-anchor="end" font-size="3.7" textLength="42.34" lengthAdjust="spacingAndGlyphs" fill="#8a8886">Camping Cookware Set</text><rect x="163.38" y="251.00" width="5.9" height="9.00" fill="#118DFF"/><text transform="translate(167.43,262.700) rotate(-90)" text-anchor="end" font-size="3.7" textLength="54.60" lengthAdjust="spacingAndGlyphs" fill="#8a8886">Collapsible LED Camping La...</text><rect x="171.08" y="242.50" width="5.9" height="17.50" fill="#118DFF"/><text transform="translate(175.13,262.700) rotate(-90)" text-anchor="end" font-size="3.7" textLength="44.79" lengthAdjust="spacingAndGlyphs" fill="#8a8886">Collapsible Solar Lantern</text><rect x="178.78" y="211.30" width="5.9" height="48.70" fill="#118DFF"/><text transform="translate(182.83,262.700) rotate(-90)" text-anchor="end" font-size="3.7" textLength="39.67" lengthAdjust="spacingAndGlyphs" fill="#8a8886">Couples Sleeping Bag</text><rect x="186.48" y="249.30" width="5.9" height="10.70" fill="#118DFF"/><text transform="translate(190.53,262.700) rotate(-90)" text-anchor="end" font-size="3.7" textLength="42.56" lengthAdjust="spacingAndGlyphs" fill="#8a8886">Crank Camping Lantern</text><rect x="194.18" y="248.00" width="5.9" height="12.00" fill="#118DFF"/><text transform="translate(198.23,262.700) rotate(-90)" text-anchor="end" font-size="3.7" textLength="35.88" lengthAdjust="spacingAndGlyphs" fill="#8a8886">Crank Solar Lantern</text><rect x="201.89" y="233.00" width="5.9" height="27.00" fill="#118DFF"/><text transform="translate(205.94,262.700) rotate(-90)" text-anchor="end" font-size="3.7" textLength="15.60" lengthAdjust="spacingAndGlyphs" fill="#8a8886">Daypack</text><rect x="209.59" y="208.00" width="5.9" height="52.00" fill="#118DFF"/><text transform="translate(213.64,262.700) rotate(-90)" text-anchor="end" font-size="3.7" textLength="37.67" lengthAdjust="spacingAndGlyphs" fill="#8a8886">Double Sleeping Bag</text><rect x="217.29" y="198.00" width="5.9" height="62.00" fill="#118DFF"/><text transform="translate(221.34,262.700) rotate(-90)" text-anchor="end" font-size="3.7" textLength="47.92" lengthAdjust="spacingAndGlyphs" fill="#8a8886">Double Wide Sleeping Bag</text><rect x="224.99" y="215.00" width="5.9" height="45.00" fill="#118DFF"/><text transform="translate(229.04,262.700) rotate(-90)" text-anchor="end" font-size="3.7" textLength="39.45" lengthAdjust="spacingAndGlyphs" fill="#8a8886">Envelop Sleeping Bag</text><rect x="232.69" y="210.00" width="5.9" height="50.00" fill="#118DFF"/><text transform="translate(236.74,262.700) rotate(-90)" text-anchor="end" font-size="3.7" textLength="51.93" lengthAdjust="spacingAndGlyphs" fill="#8a8886">Expandable Hiking Backpack</text><rect x="240.40" y="194.00" width="5.9" height="66.00" fill="#118DFF"/><text transform="translate(244.45,262.700) rotate(-90)" text-anchor="end" font-size="3.7" textLength="37.58" lengthAdjust="spacingAndGlyphs" fill="#8a8886">Family Camping Tent</text><rect x="248.10" y="212.00" width="5.9" height="48.00" fill="#118DFF"/><text transform="translate(252.15,262.700) rotate(-90)" text-anchor="end" font-size="3.7" textLength="29.64" lengthAdjust="spacingAndGlyphs" fill="#8a8886">Hiking Backpack</text><rect x="255.80" y="205.00" width="5.9" height="55.00" fill="#118DFF"/><text transform="translate(259.85,262.700) rotate(-90)" text-anchor="end" font-size="3.7" textLength="54.59" lengthAdjust="spacingAndGlyphs" fill="#8a8886">Hiking Backpack with Rain C...</text><rect x="263.50" y="217.00" width="5.9" height="43.00" fill="#118DFF"/><text transform="translate(267.55,262.700) rotate(-90)" text-anchor="end" font-size="3.7" textLength="52.36" lengthAdjust="spacingAndGlyphs" fill="#8a8886">Hiking Daypack with Hydrat...</text><rect x="271.20" y="242.00" width="5.9" height="18.00" fill="#118DFF"/><text transform="translate(275.25,262.700) rotate(-90)" text-anchor="end" font-size="3.7" textLength="27.18" lengthAdjust="spacingAndGlyphs" fill="#8a8886">Hydration Pack</text><rect x="278.91" y="203.50" width="5.9" height="56.50" fill="#118DFF"/><text transform="translate(282.96,262.700) rotate(-90)" text-anchor="end" font-size="3.7" textLength="35.36" lengthAdjust="spacingAndGlyphs" fill="#8a8886">Instant Pop-Up Tent</text><rect x="286.61" y="241.00" width="5.9" height="19.00" fill="#118DFF"/><text transform="translate(290.66,262.700) rotate(-90)" text-anchor="end" font-size="3.7" textLength="33.53" lengthAdjust="spacingAndGlyphs" fill="#8a8886">Kids' Sleeping Bag</text><rect x="294.31" y="250.00" width="5.9" height="10.00" fill="#118DFF"/><text transform="translate(298.36,262.700) rotate(-90)" text-anchor="end" font-size="3.7" textLength="39.67" lengthAdjust="spacingAndGlyphs" fill="#8a8886">LED Camping Lantern</text><rect x="302.01" y="235.00" width="5.9" height="25.00" fill="#118DFF"/><text transform="translate(306.06,262.700) rotate(-90)" text-anchor="end" font-size="3.7" textLength="54.60" lengthAdjust="spacingAndGlyphs" fill="#8a8886">LED Rechargeable Camp La...</text><rect x="309.71" y="220.00" width="5.9" height="40.00" fill="#118DFF"/><text transform="translate(313.76,262.700) rotate(-90)" text-anchor="end" font-size="3.7" textLength="51.70" lengthAdjust="spacingAndGlyphs" fill="#8a8886">Lightweight Down Sleeping...</text><rect x="317.42" y="218.00" width="5.9" height="42.00" fill="#118DFF"/><text transform="translate(321.47,262.700) rotate(-90)" text-anchor="end" font-size="3.7" textLength="39.22" lengthAdjust="spacingAndGlyphs" fill="#8a8886">Mummy Sleeping Bag</text><rect x="325.12" y="222.00" width="5.9" height="38.00" fill="#118DFF"/><text transform="translate(329.17,262.700) rotate(-90)" text-anchor="end" font-size="3.7" textLength="34.69" lengthAdjust="spacingAndGlyphs" fill="#8a8886">Pop-Up Beach Tent</text><rect x="332.82" y="241.70" width="5.9" height="18.30" fill="#118DFF"/><text transform="translate(336.87,262.700) rotate(-90)" text-anchor="end" font-size="3.7" textLength="50.14" lengthAdjust="spacingAndGlyphs" fill="#8a8886">Portable Backpacking Stove</text><rect x="340.52" y="239.60" width="5.9" height="20.40" fill="#118DFF"/><text transform="translate(344.57,262.700) rotate(-90)" text-anchor="end" font-size="3.7" textLength="34.76" lengthAdjust="spacingAndGlyphs" fill="#8a8886">Portable Gas Stove</text><rect x="348.22" y="238.60" width="5.9" height="21.40" fill="#118DFF"/><text transform="translate(352.27,262.700) rotate(-90)" text-anchor="end" font-size="3.7" textLength="37.81" lengthAdjust="spacingAndGlyphs" fill="#8a8886">Portable Wood Stove</text><rect x="355.93" y="244.80" width="5.9" height="15.20" fill="#118DFF"/><text transform="translate(359.98,262.700) rotate(-90)" text-anchor="end" font-size="3.7" textLength="43.68" lengthAdjust="spacingAndGlyphs" fill="#8a8886">Propane Camping Stove</text><rect x="363.63" y="242.40" width="5.9" height="17.60" fill="#118DFF"/><text transform="translate(367.68,262.700) rotate(-90)" text-anchor="end" font-size="3.7" textLength="51.48" lengthAdjust="spacingAndGlyphs" fill="#8a8886">Rechargeable Camp Lantern</text><rect x="371.33" y="243.40" width="5.9" height="16.60" fill="#118DFF"/><text transform="translate(375.38,262.700) rotate(-90)" text-anchor="end" font-size="3.7" textLength="54.37" lengthAdjust="spacingAndGlyphs" fill="#8a8886">Rechargeable LED Camping...</text><rect x="379.03" y="226.40" width="5.9" height="33.60" fill="#118DFF"/><text transform="translate(383.08,262.700) rotate(-90)" text-anchor="end" font-size="3.7" textLength="46.58" lengthAdjust="spacingAndGlyphs" fill="#8a8886">Rectangular Sleeping Bag</text><rect x="386.73" y="240.70" width="5.9" height="19.30" fill="#118DFF"/><text transform="translate(390.78,262.700) rotate(-90)" text-anchor="end" font-size="3.7" textLength="41.23" lengthAdjust="spacingAndGlyphs" fill="#8a8886">Solar-Powered Lantern</text><rect x="394.44" y="228.90" width="5.9" height="31.10" fill="#118DFF"/><text transform="translate(398.49,262.700) rotate(-90)" text-anchor="end" font-size="3.7" textLength="43.00" lengthAdjust="spacingAndGlyphs" fill="#8a8886">Ultralight Camping Pack</text><rect x="402.14" y="230.60" width="5.9" height="29.40" fill="#118DFF"/><text transform="translate(406.19,262.700) rotate(-90)" text-anchor="end" font-size="3.7" textLength="52.36" lengthAdjust="spacingAndGlyphs" fill="#8a8886">Ultralight Daypack with Hyd...</text><rect x="409.84" y="203.60" width="5.9" height="56.40" fill="#118DFF"/><text transform="translate(413.89,262.700) rotate(-90)" text-anchor="end" font-size="3.7" textLength="52.15" lengthAdjust="spacingAndGlyphs" fill="#8a8886">Ultralight Down Sleeping Bag</text><rect x="417.54" y="223.00" width="5.9" height="37.00" fill="#118DFF"/><text transform="translate(421.59,262.700) rotate(-90)" text-anchor="end" font-size="3.7" textLength="46.57" lengthAdjust="spacingAndGlyphs" fill="#8a8886">Ultralight Hiking Backpack</text><rect x="425.24" y="236.50" width="5.9" height="23.50" fill="#118DFF"/><text transform="translate(429.29,262.700) rotate(-90)" text-anchor="end" font-size="3.7" textLength="39.43" lengthAdjust="spacingAndGlyphs" fill="#8a8886">Ultralight Mummy Bag</text><text x="247.2" y="321" text-anchor="middle" font-size="3.8" textLength="16" lengthAdjust="spacingAndGlyphs" fill="#8a8886">Camping</text><line x1="62" x2="62" y1="262" y2="322" stroke="#eee" stroke-width="0.4"/><text x="247.3" y="328.9" text-anchor="middle" font-size="4.6" font-weight="700" textLength="30.4" lengthAdjust="spacingAndGlyphs" fill="#444">product_name</text><text transform="translate(44.9,189.7) rotate(-90)" text-anchor="middle" font-size="4.6" font-weight="700" textLength="56" lengthAdjust="spacingAndGlyphs" fill="#444">Sum of purchase_revenue</text></g></svg>
<div class="b" style="left:187px;top:147.3px;width:94.5px;height:77.1px;background:#fff;border-radius:2.500px;box-shadow:0 1px 4px rgba(0,0,0,0.28),0 0 1px rgba(0,0,0,0.25)"></div>
<div class="b" style="left:187px;top:173.5px;width:94.5px;height:12.6px;background:#f1f1f1"></div>
<div class="t" style="left:201.7px;top:155.7px;font-size:6.6px;color:#252423;font-weight:400;transform:translate(0,-50%);letter-spacing:-0.146px;">Show as a table</div>
<div class="t" style="left:201.7px;top:168.8px;font-size:6.6px;color:#252423;font-weight:400;transform:translate(0,-50%);letter-spacing:-0.137px;">New visual calculation</div>
<div class="t" style="left:201.7px;top:181.2px;font-size:6.6px;color:#252423;font-weight:400;transform:translate(0,-50%);letter-spacing:-0.119px;">Drill up</div>
<div class="t" style="left:201.7px;top:193.6px;font-size:6.6px;color:#b3b0ad;font-weight:400;transform:translate(0,-50%);letter-spacing:-0.171px;">Group</div>
<div class="t" style="left:201.7px;top:206.0px;font-size:6.6px;color:#252423;font-weight:400;transform:translate(0,-50%);letter-spacing:-0.172px;">Summarize</div>
<div class="t" style="left:201.7px;top:218.5px;font-size:6.6px;color:#252423;font-weight:400;transform:translate(0,-50%);letter-spacing:-0.179px;">Copy</div>
<svg class="b" style="left:191.5px;top:176.6px;" width="7" height="7" viewBox="0 0 7 7"><circle cx="3.500" cy="3.500" r="2.800" fill="none" stroke="#444" stroke-width="0.600"/><path d="M3.500 5.200V2M2.200 3.200l1.300-1.300 1.300 1.300" fill="none" stroke="#444" stroke-width="0.600"/></svg>
<svg class="b" style="left:270.5px;top:214px;" width="6" height="7" viewBox="0 0 6 7"><path d="M1.800 1l2.600 2.500L1.800 6" fill="none" stroke="#555" stroke-width="0.700"/></svg>
<div class="b" style="left:278.3px;top:187.5px;width:29.3px;height:13.3px;background:#fff;border:1px solid #8a8a8a;border-radius:0.5px;box-sizing:border-box"></div>
<div class="t" style="left:293.0px;top:195.2px;font-size:6.6px;color:#252423;font-weight:400;transform:translate(-50%,-50%);letter-spacing:-0.142px;">Drill up</div>
<div class="b" style="left:454px;top:89px;width:106.5px;height:366.5px;background:#fefefe"></div>
<div class="b" style="left:454px;top:89px;width:1px;height:348px;background:#dcdcdc"></div>
<div class="b" style="left:455px;top:89px;width:105.5px;height:41.4px;background:#f7f7f7"></div>
<svg class="b" style="left:460px;top:94px;" width="10" height="10" viewBox="0 0 10 10"><path d="M1.400 2h7.200M2.600 4.600h4.800M3.800 7.200h2.400" stroke="#444" stroke-width="0.9" fill="none"/></svg>
<div class="t" style="left:473.8px;top:99.1px;font-size:8.4px;color:#252423;font-weight:700;transform:translate(0,-50%);letter-spacing:-0.373px;">Filters</div>
<svg class="b" style="left:532.3px;top:96.3px;" width="5.6" height="4.2" viewBox="0 0 8 6"><path d="M0.800 3C2 1.400 3 1 4 1s2 .4 3.200 2C6 4.600 5 5 4 5S2 4.600.8 3z" fill="none" stroke="#555" stroke-width="0.800"/><circle cx="4" cy="3" r="1.200" fill="#555"/></svg>
<svg class="b" style="left:548px;top:95.5px;" width="6" height="7" viewBox="0 0 6 7"><path d="M1.800 1.600l2.100 1.900L1.800 5.400" fill="none" stroke="#3a3a3a" stroke-width="1.150"/></svg>
<div class="b" style="left:458.3px;top:112.1px;width:95.4px;height:16.2px;background:#fff;border:0.800px solid #d0d0d0;border-radius:2px;box-sizing:border-box"></div>
<svg class="b" style="left:464.5px;top:116.5px;" width="8" height="8" viewBox="0 0 8 8"><circle cx="3.200" cy="3.200" r="2.200" fill="none" stroke="#555" stroke-width="0.700"/><path d="M4.800 4.800L7 7" stroke="#555" stroke-width="0.700"/></svg>
<div class="t" style="left:479.8px;top:121.5px;font-size:6.8px;color:#3b3a39;font-weight:400;transform:translate(0,-50%);">Search</div>
<div class="b" style="left:454.5px;top:130.3px;width:106px;height:0.8px;background:#e2e2e2"></div>
<div class="t" style="left:458.7px;top:144.9px;font-size:6.25px;color:#3b3a39;font-weight:400;transform:translate(0,-50%);letter-spacing:-0.022px;">Filters on this visual</div>
<div class="t" style="left:546.5px;top:144.6px;font-size:5.5px;color:#3b3a39;font-weight:400;transform:translate(0,-50%);">...</div>
<div class="b" style="left:458.3px;top:152.8px;width:97.3px;height:23.7px;background:#fff;border:0.700px solid #e0e0e0;border-radius:1.500px;box-sizing:border-box"></div>
<div class="t" style="left:463.8px;top:161.1px;font-size:6.25px;color:#252423;font-weight:400;transform:translate(0,-50%);letter-spacing:-0.006px;">product_category</div>
<div class="t" style="left:463.8px;top:170.0px;font-size:6.0px;color:#3b3a39;font-weight:400;transform:translate(0,-50%);letter-spacing:-0.021px;">is (All)</div>
<div class="b" style="left:458.3px;top:180.1px;width:97.3px;height:23.7px;background:#fff;border:0.700px solid #e0e0e0;border-radius:1.500px;box-sizing:border-box"></div>
<div class="t" style="left:463.8px;top:188.4px;font-size:6.25px;color:#252423;font-weight:400;transform:translate(0,-50%);letter-spacing:-0.03px;">product_name</div>
<div class="t" style="left:463.8px;top:197.3px;font-size:6.0px;color:#3b3a39;font-weight:400;transform:translate(0,-50%);letter-spacing:-0.021px;">is (All)</div>
<div class="b" style="left:458.3px;top:207.4px;width:97.3px;height:23.7px;background:#fff;border:0.700px solid #e0e0e0;border-radius:1.500px;box-sizing:border-box"></div>
<div class="t" style="left:463.8px;top:215.7px;font-size:6.25px;color:#252423;font-weight:400;transform:translate(0,-50%);letter-spacing:-0.126px;">Sum of purchase_reve...</div>
<div class="t" style="left:463.8px;top:224.6px;font-size:6.0px;color:#3b3a39;font-weight:400;transform:translate(0,-50%);letter-spacing:-0.021px;">is (All)</div>
<div class="b" style="left:458.3px;top:234.7px;width:97.3px;height:23.7px;background:#ebebeb;border:0.700px solid #e0e0e0;border-radius:1.500px;box-sizing:border-box"></div>
<div class="t" style="left:463.8px;top:243.0px;font-size:6.25px;color:#252423;font-weight:700;transform:translate(0,-50%);letter-spacing:-0.137px;font-style:italic;">product_category</div>
<div class="t" style="left:463.8px;top:251.9px;font-size:6.0px;color:#3b3a39;font-weight:400;transform:translate(0,-50%);letter-spacing:-0.001px;font-style:italic;">is Camping</div>
<div class="b" style="left:458.3px;top:262.2px;width:97.3px;height:23.7px;background:#fff;border:0.700px solid #e0e0e0;border-radius:1.500px;box-sizing:border-box"></div>
<div class="t" style="left:507px;top:275.6px;font-size:6.25px;color:#3b3a39;font-weight:400;transform:translate(-50%,-50%);letter-spacing:0.01px;">Add data fields here</div>
<div class="t" style="left:458.7px;top:305.8px;font-size:6.25px;color:#3b3a39;font-weight:400;transform:translate(0,-50%);letter-spacing:0.005px;">Filters on this page</div>
<div class="t" style="left:546.5px;top:305.5px;font-size:5.5px;color:#3b3a39;font-weight:400;transform:translate(0,-50%);">...</div>
<div class="b" style="left:458.3px;top:313.3px;width:97.3px;height:23.7px;background:#ebebeb;border:0.700px solid #e0e0e0;border-radius:1.500px;box-sizing:border-box"></div>
<div class="t" style="left:463.8px;top:321.6px;font-size:6.25px;color:#252423;font-weight:700;transform:translate(0,-50%);letter-spacing:-0.008px;">daterange</div>
<div class="t" style="left:463.8px;top:330.5px;font-size:6.0px;color:#3b3a39;font-weight:400;transform:translate(0,-50%);letter-spacing:0.209px;">1/1/2023 - 12/31/2023</div>
<div class="b" style="left:458.3px;top:340.6px;width:97.3px;height:23.7px;background:#fff;border:0.700px solid #e0e0e0;border-radius:1.500px;box-sizing:border-box"></div>
<div class="t" style="left:507px;top:354.0px;font-size:6.25px;color:#3b3a39;font-weight:400;transform:translate(-50%,-50%);letter-spacing:0.01px;">Add data fields here</div>
<div class="t" style="left:458.7px;top:384.0px;font-size:6.25px;color:#3b3a39;font-weight:400;transform:translate(0,-50%);letter-spacing:-0.048px;">Filters on all pages</div>
<div class="t" style="left:546.5px;top:383.7px;font-size:5.5px;color:#3b3a39;font-weight:400;transform:translate(0,-50%);">...</div>
<div class="b" style="left:458.3px;top:391.9px;width:97.3px;height:23.7px;background:#fff;border:0.700px solid #e0e0e0;border-radius:1.500px;box-sizing:border-box"></div>
<div class="t" style="left:507px;top:405.3px;font-size:6.25px;color:#3b3a39;font-weight:400;transform:translate(-50%,-50%);letter-spacing:0.01px;">Add data fields here</div>
<div class="b" style="left:560.3px;top:89px;width:95.4px;height:366.5px;background:#f3f3f3;border-left:0.8px solid #d0d0d0;border-right:0.8px solid #d0d0d0;box-sizing:border-box"></div>
<div class="t" style="left:564.2px;top:99.1px;font-size:8.4px;color:#252423;font-weight:700;transform:translate(0,-50%);letter-spacing:-0.255px;">Visualizations</div>
<svg class="b" style="left:644.5px;top:95.5px;" width="6" height="7" viewBox="0 0 6 7"><path d="M1.800 1.600l2.100 1.900L1.800 5.400" fill="none" stroke="#3a3a3a" stroke-width="1.150"/></svg>
<div class="t" style="left:564.5px;top:113.7px;font-size:6.25px;color:#333;font-weight:700;transform:translate(0,-50%);letter-spacing:-0.206px;">Build visual</div>
<div class="b" style="left:564px;top:119px;width:16.6px;height:16.4px;background:#fff;border-radius:1.500px"></div>
<svg class="b" style="left:566.3px;top:120.5px;" width="12" height="13" viewBox="0 0 12 13"><rect x="0.500" y="0.400" width="11" height="0.900" fill="#888"/><rect x="0.300" y="3" width="11.400" height="3.600" fill="#117865"/><rect x="0.300" y="8" width="11.400" height="3.600" fill="#117865"/><path d="M0.300 4.800h11.400M0.300 9.800h11.400" stroke="#9fd0c4" stroke-width="0.500" stroke-dasharray="1 1"/></svg>
<svg class="b" style="left:600.8px;top:119.6px;" width="13" height="14" viewBox="0 0 13 14"><path d="M2 11.600V6.800h2V3.200c0-.9 2.200-.9 2.200 0v2.600h1.600v1.800" fill="none" stroke="#666" stroke-width="0.800"/><path d="M2 11.600h3" fill="none" stroke="#666" stroke-width="0.800"/><path d="M4.600 13l1.200-2.600 5.400-6 1.600 1.400-5.400 6z" fill="#f3f3f3" stroke="#666" stroke-width="0.800"/><path d="M6 10.400l1.500 1.400" stroke="#666" stroke-width="0.600"/></svg>
<svg class="b" style="left:635.3px;top:119.6px;" width="14" height="14" viewBox="0 0 14 14"><circle cx="5.800" cy="5.800" r="4.500" fill="#f6f6f6" stroke="#555" stroke-width="0.800"/><path d="M9.200 9.200l3.500 3.500" stroke="#555" stroke-width="1.300"/><path d="M2.600 6l1.600-1.400 1.400 1 2.600-2.200" fill="none" stroke="#666" stroke-width="0.600"/><path d="M3.400 8.600v-1.200M5 8.800v-1.800M6.600 8.800v-1.400M8.200 8.200v-2.400" stroke="#666" stroke-width="0.800"/></svg>
<svg class="b" style="left:560.8px;top:137px;" width="93.5" height="6" viewBox="0 0 93.5 6"><path d="M0 4.500h9l2.600-2.600 2.600 2.600h79.300" fill="none" stroke="#d6d6d6" stroke-width="0.700"/></svg>
<div class="b" style="left:579px;top:146.2px;width:13px;height:12.6px;border:0.700px solid #777;background:#f8f8f8;box-sizing:border-box"></div>
<svg class="b" style="left:565.5px;top:147.6px;" width="9.8" height="9.8" viewBox="0 0 10 10"><path d="M0.600 0.500v9h9" fill="none" stroke="#7a7a7a" stroke-width="0.700"/><rect x="1" y="1" width="4.400" height="1.800" fill="#3a92dc"/><rect x="1" y="3.800" width="6.400" height="1.800" fill="#fff" stroke="#7a7a7a" stroke-width="0.500"/><rect x="1" y="6.600" width="8" height="1.800" fill="#d0d0d0" stroke="#7a7a7a" stroke-width="0.500"/></svg>
<svg class="b" style="left:580.4px;top:147.6px;" width="9.8" height="9.8" viewBox="0 0 10 10"><path d="M0.400 9.500h9.400" stroke="#7a7a7a" stroke-width="0.700"/><rect x="1.600" y="3" width="2" height="6.400" fill="#fff" stroke="#7a7a7a" stroke-width="0.500"/><rect x="1.600" y="3" width="2" height="3" fill="#3a92dc"/><rect x="4.600" y="1" width="2" height="8.400" fill="#fff" stroke="#7a7a7a" stroke-width="0.500"/><rect x="7.400" y="2.400" width="1.800" height="7" fill="#d0d0d0" stroke="#7a7a7a" stroke-width="0.500"/></svg>
<svg class="b" style="left:594.9px;top:147.6px;" width="9.8" height="9.8" viewBox="0 0 10 10"><path d="M0.600 0.500v9h9" fill="none" stroke="#7a7a7a" stroke-width="0.700"/><rect x="1" y="0.800" width="8.400" height="2" fill="#3a92dc"/><rect x="1" y="3.600" width="5" height="1.800" fill="#fff" stroke="#7a7a7a" stroke-width="0.500"/><rect x="1" y="6.400" width="7" height="1.800" fill="#d0d0d0" stroke="#7a7a7a" stroke-width="0.500"/></svg>
<svg class="b" style="left:609.6px;top:147.6px;" width="9.8" height="9.8" viewBox="0 0 10 10"><path d="M0.400 9.500h9.400" stroke="#7a7a7a" stroke-width="0.700"/><rect x="1" y="0.600" width="2.400" height="8.800" fill="#3a92dc"/><path d="M3.600 9.400V3.400l2 2.600V9.400z" fill="#aaa"/><rect x="5.800" y="4.400" width="1.600" height="5" fill="#aaa"/><rect x="7.600" y="2.600" width="1.800" height="6.800" fill="#d0d0d0" stroke="#999" stroke-width="0.400"/></svg>
<svg class="b" style="left:624.2px;top:147.6px;" width="9.8" height="9.8" viewBox="0 0 10 10"><path d="M0.600 0.500v9h9" fill="none" stroke="#7a7a7a" stroke-width="0.700"/><rect x="1" y="1" width="8.400" height="1.800" fill="#fff" stroke="#7a7a7a" stroke-width="0.500"/><rect x="4.600" y="1" width="4.800" height="1.800" fill="#3a92dc"/><rect x="1" y="3.800" width="8.400" height="1.800" fill="#fff" stroke="#7a7a7a" stroke-width="0.500"/><rect x="3.400" y="3.800" width="6" height="1.800" fill="#3a92dc"/><rect x="1" y="6.600" width="8.400" height="1.800" fill="#d0d0d0" stroke="#7a7a7a" stroke-width="0.500"/><rect x="5.600" y="6.600" width="3.800" height="1.800" fill="#3a92dc"/></svg>
<svg class="b" style="left:638.9px;top:147.6px;" width="9.8" height="9.8" viewBox="0 0 10 10"><path d="M0.400 9.500h9.400" stroke="#7a7a7a" stroke-width="0.700"/><rect x="1.400" y="0.600" width="2" height="8.800" fill="#fff" stroke="#7a7a7a" stroke-width="0.500"/><rect x="1.400" y="0.600" width="2" height="3.600" fill="#3a92dc"/><rect x="4.200" y="0.600" width="2" height="8.800" fill="#fff" stroke="#7a7a7a" stroke-width="0.500"/><rect x="4.200" y="0.600" width="2" height="5.400" fill="#3a92dc"/><rect x="7" y="0.600" width="2" height="8.800" fill="#d0d0d0" stroke="#7a7a7a" stroke-width="0.500"/><rect x="7" y="0.600" width="2" height="2.600" fill="#3a92dc"/></svg>
<svg class="b" style="left:565.5px;top:162.3px;" width="9.8" height="9.8" viewBox="0 0 10 10"><path d="M0.600 0.500v9h9" fill="none" stroke="#7a7a7a" stroke-width="0.700"/><path d="M1 6.600l2.600-3.400 1.800 2 2-3 2 1.600" fill="none" stroke="#7a7a7a" stroke-width="0.600"/><path d="M1 8l3-3 2 1.400L9.400 3" fill="none" stroke="#3a92dc" stroke-width="0.800"/></svg>
<svg class="b" style="left:580.4px;top:162.3px;" width="9.8" height="9.8" viewBox="0 0 10 10"><path d="M0.400 9.400L4 2l2 3 1.600-2.400 2.200 6.800z" fill="#fff" stroke="#7a7a7a" stroke-width="0.500"/><path d="M0.400 9.400l3-3.400 1.600 1.600 2.400-3 2.400 4.800z" fill="#3a92dc"/></svg>
<svg class="b" style="left:594.9px;top:162.3px;" width="9.8" height="9.8" viewBox="0 0 10 10"><path d="M0.600 0.500v9h9" fill="none" stroke="#7a7a7a" stroke-width="0.700"/><path d="M1 3l2.400 2.400 2-2 2 2 2-2.400v2.600l-2 2.200-2-1.800-2 2L1 5.800z" fill="#3a92dc"/><path d="M1 6.400l2.400 2 2-1.800 2 1.600 2-2" fill="none" stroke="#7a7a7a" stroke-width="0.500"/></svg>
<svg class="b" style="left:609.6px;top:162.3px;" width="9.8" height="9.8" viewBox="0 0 10 10"><path d="M0.600 0.500v9h9" fill="none" stroke="#7a7a7a" stroke-width="0.700"/><path d="M1 1h8.600v4l-1.600 2-2.400-1.600-2.200 2L1 5z" fill="#3a92dc"/></svg>
<svg class="b" style="left:624.2px;top:162.3px;" width="9.8" height="9.8" viewBox="0 0 10 10"><path d="M0.400 9.500h9.400" stroke="#7a7a7a" stroke-width="0.700"/><rect x="1" y="1.400" width="2" height="8" fill="#3a92dc"/><rect x="3.800" y="4" width="1.800" height="5.400" fill="#888"/><rect x="6.400" y="2.600" width="1.800" height="6.800" fill="#aaa"/><path d="M1 8l2.800-3 2 1.400L9.400 2.600" fill="none" stroke="#555" stroke-width="0.600"/></svg>
<svg class="b" style="left:638.9px;top:162.3px;" width="9.8" height="9.8" viewBox="0 0 10 10"><path d="M0.400 9.500h9.400" stroke="#7a7a7a" stroke-width="0.700"/><rect x="1" y="5" width="2.200" height="4.400" fill="#3a92dc"/><rect x="3.400" y="1.400" width="2" height="8" fill="#3a92dc"/><rect x="6.200" y="3.400" width="1.800" height="6" fill="#aaa"/><path d="M1 8l3-2.600 2 1.200 3.400-3.400" fill="none" stroke="#555" stroke-width="0.600"/></svg>
<svg class="b" style="left:565.5px;top:176.9px;" width="9.8" height="9.8" viewBox="0 0 10 10"><path d="M0.600 0.500v9h9" fill="none" stroke="#7a7a7a" stroke-width="0.700"/><path d="M1 3l3 3.600L6.400 4l3 2v3H1z" fill="#3a92dc"/><path d="M1 6.400l3 2 2.400-2.800 3 2V9H1z" fill="#f28e2b"/><path d="M1 2.400l3 3.800 2.400-3 3 2.200" fill="none" stroke="#7a7a7a" stroke-width="0.500"/></svg>
<svg class="b" style="left:580.4px;top:176.9px;" width="9.8" height="9.8" viewBox="0 0 10 10"><path d="M0.600 0.500v9h9" fill="none" stroke="#7a7a7a" stroke-width="0.700"/><rect x="1.400" y="4" width="2" height="5" fill="#fff" stroke="#7a7a7a" stroke-width="0.500"/><rect x="3.800" y="2" width="2" height="2.600" fill="#d0d0d0" stroke="#7a7a7a" stroke-width="0.500"/><rect x="6.400" y="0.800" width="2.400" height="8.200" fill="#3a92dc"/><rect x="3.800" y="6" width="2.400" height="3" fill="#fff" stroke="#7a7a7a" stroke-width="0.500"/></svg>
<svg class="b" style="left:594.9px;top:176.9px;" width="9.8" height="9.8" viewBox="0 0 10 10"><rect x="0.600" y="0.800" width="8.800" height="2.200" fill="#3a92dc"/><rect x="1.800" y="3.600" width="6.400" height="2" fill="#3a92dc"/><rect x="3" y="6.200" width="4" height="1.600" fill="#3a92dc"/><rect x="3.800" y="8.200" width="2.400" height="1.400" fill="#3a92dc"/></svg>
<svg class="b" style="left:609.6px;top:176.9px;" width="9.8" height="9.8" viewBox="0 0 10 10"><path d="M0.600 0.500v9h9" fill="none" stroke="#7a7a7a" stroke-width="0.700"/><circle cx="3" cy="7" r="0.700" fill="#222"/><circle cx="4.400" cy="4.600" r="0.600" fill="#3a92dc"/><circle cx="6" cy="6" r="0.600" fill="#3a92dc"/><circle cx="7.600" cy="1.600" r="0.700" fill="#222"/><circle cx="5.400" cy="2.600" r="0.500" fill="#3a92dc"/><circle cx="8" cy="7.400" r="0.600" fill="#3a92dc"/><circle cx="7" cy="4.200" r="0.500" fill="#3a92dc"/></svg>
<svg class="b" style="left:624.2px;top:176.9px;" width="9.8" height="9.8" viewBox="0 0 10 10"><circle cx="5" cy="5" r="4.300" fill="#fff" stroke="#7a7a7a" stroke-width="0.600"/><path d="M5 5V0.700A4.300 4.300 0 0 1 8.800 7z" fill="#3a92dc"/></svg>
<svg class="b" style="left:638.9px;top:176.9px;" width="9.8" height="9.8" viewBox="0 0 10 10"><circle cx="5" cy="5" r="3.400" fill="none" stroke="#3a92dc" stroke-width="1.900"/><path d="M5 0.700v2" stroke="#fff" stroke-width="0.500"/><path d="M1.200 3.200l1.700 1" stroke="#fff" stroke-width="0.500"/></svg>
<svg class="b" style="left:565.5px;top:191.5px;" width="9.8" height="9.8" viewBox="0 0 10 10"><rect x="0.500" y="0.500" width="9" height="9" fill="#fff" stroke="#7a7a7a" stroke-width="0.600"/><rect x="0.800" y="0.800" width="4.400" height="5" fill="#3a92dc"/><rect x="0.800" y="6.200" width="4.400" height="3" fill="#3a92dc"/><rect x="5.800" y="0.800" width="3.400" height="2.400" fill="#d0d0d0"/><path d="M5.500 0.500v9M5.500 3.600h4" stroke="#7a7a7a" stroke-width="0.500"/></svg>
<svg class="b" style="left:580.4px;top:191.5px;" width="9.8" height="9.8" viewBox="0 0 10 10"><circle cx="5" cy="4.400" r="3.600" fill="#fff" stroke="#444" stroke-width="0.800"/><path d="M3.400 2.400c1-.8 2.600-.4 3 .6s-.4 1.600-1.200 2 .2 1.800-.8 2-1.400-1.200-1.200-2.200-.4-1.600.2-2.400z" fill="#2e9e5b"/><path d="M3 9.400h4M5 8v1.400" stroke="#444" stroke-width="0.700"/></svg>
<svg class="b" style="left:594.9px;top:191.5px;" width="9.8" height="9.8" viewBox="0 0 10 10"><path d="M0.800 1.400l3 .8 1.600-1 3.800.8v5l-2.600 2-2.400-.6-2 .6-1.400-2.600z" fill="#fff" stroke="#7a7a7a" stroke-width="0.600"/><path d="M0.800 1.400l3 .8.400 3.200-3 .6z" fill="#3a92dc"/><path d="M4.600 6l4-.4.600 1.400-2.600 2-2.400-.600z" fill="#3a92dc"/><path d="M1.200 6l3.200-.6.400 3L2.200 9z" fill="#d0d0d0"/></svg>
<svg class="b" style="left:609.6px;top:191.5px;" width="9.8" height="9.8" viewBox="0 0 10 10"><path d="M5.200 0.400L9 9.600 5.200 7 1.200 9.600z" fill="#3a92dc"/><path d="M5.200 0.400V7L1.200 9.600z" fill="#5ba7e8"/></svg>
<svg class="b" style="left:624.2px;top:191.5px;" width="9.8" height="9.8" viewBox="0 0 10 10"><path d="M1.200 7.400a3.800 3.800 0 0 1 7.600 0" fill="none" stroke="#666" stroke-width="1.300"/><path d="M5 3.600a3.800 3.800 0 0 1 3.800 3.800" fill="none" stroke="#3a92dc" stroke-width="1.300"/><path d="M5 7.600l1.400-2.400" stroke="#333" stroke-width="0.600"/></svg>
<svg class="b" style="left:638.9px;top:191.5px;" width="9.8" height="9.8" viewBox="0 0 10 10"><rect x="0.500" y="1.600" width="9" height="6.800" fill="#d0d0d0" stroke="#7a7a7a" stroke-width="0.700"/><text x="5" y="6.600" text-anchor="middle" font-size="4.200" font-weight="700" fill="#3a92dc" font-family="Liberation Sans,sans-serif">123</text></svg>
<svg class="b" style="left:565.5px;top:206.1px;" width="9.8" height="9.8" viewBox="0 0 10 10"><rect x="0.600" y="0.800" width="8.800" height="8.400" rx="0.600" fill="#fff" stroke="#7a7a7a" stroke-width="0.700"/><path d="M2.200 3h2M2.200 5h2M2.200 7h2" stroke="#7a7a7a" stroke-width="0.700"/><path d="M3.600 3h4.400M3.600 5h4.400M3.600 7h4.400" stroke="#3a92dc" stroke-width="0.800"/></svg>
<svg class="b" style="left:580.4px;top:206.1px;" width="9.8" height="9.8" viewBox="0 0 10 10"><rect x="0.600" y="1.400" width="8.800" height="7" fill="#d0d0d0" stroke="#7a7a7a" stroke-width="0.700"/><path d="M2.200 5.800l1.400-2.400L5 5.800z" fill="#2e9e5b"/><path d="M5.200 3.600l1.400 2.400L8 3.600z" fill="#d13438"/></svg>
<svg class="b" style="left:594.9px;top:206.1px;" width="9.8" height="9.8" viewBox="0 0 10 10"><rect x="0.600" y="0.800" width="8.400" height="7.600" fill="#fff" stroke="#7a7a7a" stroke-width="0.700"/><path d="M0.600 2.800h8.400" stroke="#7a7a7a" stroke-width="0.900"/><path d="M2 5h3" stroke="#7a7a7a" stroke-width="0.600"/><path d="M5 4.800h4.600L7.900 7v2.400L6.700 8.600V7z" fill="#fff" stroke="#333" stroke-width="0.600"/></svg>
<svg class="b" style="left:609.6px;top:206.1px;" width="9.8" height="9.8" viewBox="0 0 10 10"><rect x="0.600" y="0.800" width="8.800" height="8.400" fill="#fff" stroke="#7a7a7a" stroke-width="0.700"/><rect x="0.600" y="0.800" width="8.800" height="1.900" fill="#9a9a9a"/><path d="M0.600 2.700h8.800M0.600 4.900h8.800M0.600 7.100h8.800M3.600 0.800v8.400M6.500 0.800v8.400" stroke="#7a7a7a" stroke-width="0.600"/></svg>
<svg class="b" style="left:624.2px;top:206.1px;" width="9.8" height="9.8" viewBox="0 0 10 10"><rect x="0.600" y="0.800" width="8.800" height="8.400" fill="#fff" stroke="#7a7a7a" stroke-width="0.700"/><rect x="0.600" y="0.800" width="8.800" height="1.900" fill="#9a9a9a"/><rect x="3.600" y="4.900" width="5.800" height="4.300" fill="#3a92dc"/><rect x="0.600" y="4.900" width="3" height="4.300" fill="#8fc0ec"/><path d="M0.600 2.700h8.800M0.600 4.900h8.800M0.600 7.100h8.800M3.600 0.800v8.400M6.500 0.800v8.400" stroke="#6a6a6a" stroke-width="0.600"/></svg>
<svg class="b" style="left:638.9px;top:206.1px;" width="9.8" height="9.8" viewBox="0 0 10 10"><text x="5" y="8.600" text-anchor="middle" font-size="9" font-weight="400" fill="#3a92dc" stroke="#3a92dc" stroke-width="0.25" font-family="Liberation Sans,sans-serif">R</text></svg>
<svg class="b" style="left:565.5px;top:220.7px;" width="9.8" height="9.8" viewBox="0 0 10 10"><text x="5" y="7.800" text-anchor="middle" font-size="8.800" font-weight="400" fill="#3a92dc" stroke="#3a92dc" stroke-width="0.2" font-family="Liberation Sans,sans-serif" textLength="10.200" lengthAdjust="spacingAndGlyphs">Py</text></svg>
<svg class="b" style="left:580.4px;top:220.7px;" width="9.8" height="9.8" viewBox="0 0 10 10"><path d="M0.800 0.600v8.800" stroke="#7a7a7a" stroke-width="0.700"/><path d="M0.800 2.400h7M0.800 5h4.600M0.800 7.600h3" stroke="#7a7a7a" stroke-width="0.600"/><circle cx="8" cy="2.400" r="1" fill="#3a92dc"/><circle cx="6" cy="5" r="1" fill="#3a92dc"/><circle cx="4.200" cy="7.600" r="1" fill="#3a92dc"/></svg>
<svg class="b" style="left:594.9px;top:220.7px;" width="9.8" height="9.8" viewBox="0 0 10 10"><rect x="0.400" y="3.800" width="3.200" height="2.400" fill="#3a92dc"/><path d="M3.600 5h1.600M5.200 1.800v6.400M5.200 1.800h1.200M5.200 5h1.200M5.200 8.200h1.200" stroke="#3a92dc" stroke-width="0.600" fill="none"/><rect x="6.400" y="0.800" width="3" height="2" fill="#3a92dc"/><rect x="6.400" y="4" width="3" height="2" fill="#3a92dc"/><rect x="6.400" y="7.200" width="3" height="2" fill="#3a92dc"/></svg>
<svg class="b" style="left:609.6px;top:220.7px;" width="9.8" height="9.8" viewBox="0 0 10 10"><path d="M1.200 1.200h7.600c.4 0 .6.200.6.600v4.800c0 .4-.2.600-.6.600H5L3 9.200V7.200H1.200c-.4 0-.6-.2-.6-.6V1.800c0-.4.200-.6.600-.6z" fill="#fff" stroke="#3a92dc" stroke-width="0.800"/></svg>
<svg class="b" style="left:624.2px;top:220.7px;" width="9.8" height="9.8" viewBox="0 0 10 10"><path d="M1.800 0.600h4.400l2.400 2.400v6.400H1.800z" fill="#fff" stroke="#444" stroke-width="0.700"/><path d="M6.200 0.600V3h2.400" fill="none" stroke="#444" stroke-width="0.600"/><path d="M3 4.600h2M3 6h4" stroke="#3a92dc" stroke-width="0.800"/><rect x="5.400" y="6.600" width="2" height="1.600" fill="#3a92dc"/></svg>
<svg class="b" style="left:638.9px;top:220.7px;" width="9.8" height="9.8" viewBox="0 0 10 10"><path d="M2.800 0.800h4.400v3.400c0 1.400-1 2.400-2.200 2.400S2.800 5.600 2.800 4.200z" fill="#fff" stroke="#555" stroke-width="0.800"/><path d="M3.200 1.200h3.600v1.600H3.200z" fill="#3a92dc"/><path d="M2.800 1.800H1v1c0 1 .8 1.800 1.800 1.800M7.200 1.800H9v1c0 1-.8 1.800-1.800 1.800M5 6.600v1.600M3 9.200h4M3.600 8.200h2.800" fill="none" stroke="#555" stroke-width="0.700"/><path d="M3.400 8.700h3.200" stroke="#3a92dc" stroke-width="0.9"/></svg>
<svg class="b" style="left:565.5px;top:235.4px;" width="9.8" height="9.8" viewBox="0 0 10 10"><path d="M1.400 0.600h4.800l2.400 2.400v6.400H1.400z" fill="#fff" stroke="#333" stroke-width="0.800"/><path d="M6.200 0.600V3h2.400" fill="none" stroke="#333" stroke-width="0.600"/><path d="M3 8.600V6M4.600 8.600V4.600M6.200 8.600V6.600M7.400 8.600V5.400" stroke="#333" stroke-width="0.900"/></svg>
<svg class="b" style="left:580.4px;top:235.4px;" width="9.8" height="9.8" viewBox="0 0 10 10"><rect x="2" y="2.600" width="7.400" height="6.400" fill="#dbe9f7" stroke="#7fb2e5" stroke-width="0.500"/><path d="M2 7l2.600-2 2 1.600L9.400 4" fill="none" stroke="#fff" stroke-width="0.600"/><path d="M3.400 0.400L1 4h1.800L1.600 7.400 5.400 3H3.400L5 0.400z" fill="#f28e2b"/></svg>
<svg class="b" style="left:594.9px;top:235.4px;" width="9.8" height="9.8" viewBox="0 0 10 10"><rect x="3.400" y="2.400" width="6" height="4.400" fill="#d0d0d0" stroke="#7a7a7a" stroke-width="0.500"/><circle cx="6" cy="5.200" r="1.200" fill="#fff" stroke="#7a7a7a" stroke-width="0.500"/><path d="M4 9.600c0-1.600 1-2.400 2-2.400s2 .8 2 2.400z" fill="#fff" stroke="#7a7a7a" stroke-width="0.500"/><path d="M3 0.400L0.800 4h1.600L1.400 7.200 5 3H3.200L4.600 0.400z" fill="#f28e2b"/></svg>
<svg class="b" style="left:609.6px;top:235.4px;" width="9.8" height="9.8" viewBox="0 0 10 10"><rect x="1" y="2" width="8" height="7.400" fill="#fff" stroke="#3a92dc" stroke-width="0.800" stroke-dasharray="1.400 0.600"/><path d="M2.600 0.400a1.600 1.600 0 0 1 1.600 1.600c0 1.200-1.600 2.800-1.600 2.800S1 3.200 1 2A1.600 1.600 0 0 1 2.600.4z" fill="#f28e2b"/><path d="M3 8l2-2.600 1.600 1L8.400 4" fill="none" stroke="#3a92dc" stroke-width="0.600"/><circle cx="7.400" cy="7.600" r="1" fill="#e8662a"/></svg>
<svg class="b" style="left:624.2px;top:235.4px;" width="9.8" height="9.8" viewBox="0 0 10 10"><path d="M5 0.800L9.400 5 5 9.200 0.600 5z" fill="none" stroke="#a349c4" stroke-width="0.900"/><path d="M3 3l4 4M7 3L3.600 6.400" stroke="#c060d8" stroke-width="0.800" fill="none"/></svg>
<svg class="b" style="left:638.9px;top:235.4px;" width="9.8" height="9.8" viewBox="0 0 10 10"><path d="M0.600 1.600h4.800L8.600 5 5.400 8.400H0.600L3.800 5z" fill="none" stroke="#3a92dc" stroke-width="0.800"/><path d="M6.400 1.600L9.600 5 6.400 8.400" fill="none" stroke="#3a92dc" stroke-width="0.800"/></svg>
<div class="t" style="left:567.8px;top:254.2px;font-size:6.5px;color:#3b3a39;font-weight:400;transform:translate(0,-50%);letter-spacing:0.3px;">...</div>
<div class="b" style="left:561px;top:264.2px;width:93px;height:0.6px;background:#dcdcdc"></div>
<div class="b" style="left:651.9px;top:267.4px;width:2.6px;height:140.2px;background:#8a8a8a;border-radius:1px"></div>
<div class="t" style="left:566.7px;top:275.7px;font-size:6.25px;color:#3b3a39;font-weight:400;transform:translate(0,-50%);letter-spacing:-0.161px;">X-axis</div>
<div class="b" style="left:562.4px;top:282px;width:88px;height:31.4px;border:0.600px dashed #d9d9d9;border-radius:1.500px;box-sizing:border-box"></div>
<div class="b" style="left:564.4px;top:285.3px;width:85px;height:9.8px;background:#fafafa;border:0.600px solid #e0e0e0;border-radius:1px;box-sizing:border-box"></div>
<div class="t" style="left:566.5px;top:290.9px;font-size:6.25px;color:#252423;font-weight:400;transform:translate(0,-50%);letter-spacing:-0.006px;">product_category</div>
<svg class="b" style="left:633.8px;top:287.7px;" width="5.5" height="5" viewBox="0 0 5.5 5"><path d="M0.800 1.400l1.900 2 1.900-2" fill="none" stroke="#555" stroke-width="0.600"/></svg>
<svg class="b" style="left:643.2px;top:288.0px;" width="4.5" height="4.5" viewBox="0 0 4.5 4.5"><path d="M0.800 0.800l2.800 2.800M3.600 0.800L0.800 3.600" fill="none" stroke="#555" stroke-width="0.500"/></svg>
<div class="b" style="left:564.4px;top:298.4px;width:85px;height:9.8px;background:#fafafa;border:0.600px solid #e0e0e0;border-radius:1px;box-sizing:border-box"></div>
<div class="t" style="left:566.5px;top:304.0px;font-size:6.25px;color:#252423;font-weight:400;transform:translate(0,-50%);letter-spacing:-0.03px;">product_name</div>
<svg class="b" style="left:633.8px;top:300.79999999999995px;" width="5.5" height="5" viewBox="0 0 5.5 5"><path d="M0.800 1.400l1.900 2 1.900-2" fill="none" stroke="#555" stroke-width="0.600"/></svg>
<svg class="b" style="left:643.2px;top:301.09999999999997px;" width="4.5" height="4.5" viewBox="0 0 4.5 4.5"><path d="M0.800 0.800l2.800 2.800M3.600 0.800L0.800 3.600" fill="none" stroke="#555" stroke-width="0.500"/></svg>
<div class="t" style="left:566.7px;top:324.7px;font-size:6.25px;color:#3b3a39;font-weight:400;transform:translate(0,-50%);letter-spacing:-0.065px;">Y-axis</div>
<div class="b" style="left:562.4px;top:331px;width:88px;height:18.4px;border:0.600px dashed #d9d9d9;border-radius:1.500px;box-sizing:border-box"></div>
<div class="b" style="left:564.4px;top:334.3px;width:85px;height:9.8px;background:#fafafa;border:0.600px solid #e0e0e0;border-radius:1px;box-sizing:border-box"></div>
<div class="t" style="left:566.5px;top:339.9px;font-size:6.25px;color:#252423;font-weight:400;transform:translate(0,-50%);letter-spacing:-0.126px;">Sum of purchase_reve...</div>
<svg class="b" style="left:633.8px;top:336.7px;" width="5.5" height="5" viewBox="0 0 5.5 5"><path d="M0.800 1.400l1.900 2 1.900-2" fill="none" stroke="#555" stroke-width="0.600"/></svg>
<svg class="b" style="left:643.2px;top:337.0px;" width="4.5" height="4.5" viewBox="0 0 4.5 4.5"><path d="M0.800 0.800l2.800 2.800M3.600 0.800L0.800 3.600" fill="none" stroke="#555" stroke-width="0.500"/></svg>
<div class="t" style="left:566.7px;top:361.2px;font-size:6.25px;color:#3b3a39;font-weight:400;transform:translate(0,-50%);letter-spacing:-0.109px;">Legend</div>
<div class="b" style="left:562.4px;top:367.3px;width:88px;height:14px;border:0.600px dashed #d9d9d9;border-radius:1.500px;box-sizing:border-box"></div>
<div class="t" style="left:568.1px;top:375.6px;font-size:6.25px;color:#3b3a39;font-weight:400;transform:translate(0,-50%);letter-spacing:0.01px;">Add data fields here</div>
<div class="t" style="left:566.7px;top:392.7px;font-size:6.25px;color:#3b3a39;font-weight:400;transform:translate(0,-50%);letter-spacing:-0.002px;">Small multiples</div>
<div class="b" style="left:562.4px;top:398.8px;width:88px;height:14px;border:0.600px dashed #d9d9d9;border-radius:1.500px;box-sizing:border-box"></div>
<div class="t" style="left:568.1px;top:407.1px;font-size:6.25px;color:#3b3a39;font-weight:400;transform:translate(0,-50%);letter-spacing:0.01px;">Add data fields here</div>
<div class="t" style="left:566.7px;top:423.9px;font-size:6.25px;color:#3b3a39;font-weight:400;transform:translate(0,-50%);letter-spacing:0.014px;">Tooltips</div>
<div class="b" style="left:562.4px;top:429.6px;width:88px;height:14.6px;border:0.600px dashed #d9d9d9;border-radius:1.500px;box-sizing:border-box"></div>
<div class="t" style="left:568.1px;top:437.9px;font-size:6.25px;color:#3b3a39;font-weight:400;transform:translate(0,-50%);letter-spacing:0.01px;">Add data fields here</div>
<div class="b" style="left:654.8px;top:89px;width:95.2px;height:366.5px;background:#f3f3f3"></div>
<div class="t" style="left:659.7px;top:99.1px;font-size:8.4px;color:#252423;font-weight:700;transform:translate(0,-50%);letter-spacing:-0.152px;">Data</div>
<svg class="b" style="left:739px;top:95.5px;" width="6" height="7" viewBox="0 0 6 7"><path d="M1.800 1.600l2.100 1.900L1.800 5.400" fill="none" stroke="#3a3a3a" stroke-width="1.150"/></svg>
<div class="b" style="left:657.4px;top:112.2px;width:90.2px;height:12.4px;background:#fff;border:0.700px solid #d2d0ce;border-bottom:0.900px solid #8a8886;border-radius:2px;box-sizing:border-box"></div>
<svg class="b" style="left:663.5px;top:115px;" width="8" height="8" viewBox="0 0 8 8"><circle cx="3.400" cy="3.200" r="2.400" fill="none" stroke="#555" stroke-width="0.700"/><path d="M5.200 5l2 2" stroke="#555" stroke-width="0.700"/></svg>
<div class="t" style="left:675px;top:120.0px;font-size:7px;color:#767676;font-weight:400;transform:translate(0,-50%);">Search</div>
<svg class="b" style="left:663px;top:133.5px;" width="5" height="6" viewBox="0 0 5 6"><path d="M1.200 0.800l2 2.200-2 2.200" fill="none" stroke="#555" stroke-width="0.600"/></svg>
<svg class="b" style="left:669.5px;top:131.5px;" width="10" height="11" viewBox="0 0 10 11"><rect x="1" y="1" width="6.600" height="6" rx="0.800" fill="#fff" stroke="#444" stroke-width="0.800"/><path d="M1 3h6.600M3.200 1v6M5.400 1v6" stroke="#444" stroke-width="0.600"/><circle cx="7" cy="7.700" r="2.600" fill="#117865"/><path d="M5.800 7.700l.9.900 1.600-1.700" fill="none" stroke="#fff" stroke-width="0.600"/></svg>
<div class="t" style="left:680px;top:137.0px;font-size:6.1px;color:#252423;font-weight:400;transform:translate(0,-50%);">public cc_data_view</div>
<div class="b" style="left:22px;top:433px;width:432.2px;height:22.5px;background:#fefefe;z-index:-1"></div>
<svg class="b" style="left:28px;top:439.5px;" width="11" height="10" viewBox="0 0 11 10"><rect x="1.600" y="1" width="7.800" height="6" rx="1" fill="none" stroke="#333" stroke-width="0.900"/><path d="M3.600 8.800h3.800" stroke="#333" stroke-width="0.900"/></svg>
<div class="b" style="left:28px;top:452px;width:11.5px;height:1.1px;background:#117865"></div>
<svg class="b" style="left:52px;top:439.5px;" width="9" height="11" viewBox="0 0 9 11"><rect x="2.400" y="0.800" width="4.400" height="8.800" rx="0.900" fill="none" stroke="#555" stroke-width="0.800"/><path d="M3.900 8.200h1.400" stroke="#555" stroke-width="0.600"/></svg>
<svg class="b" style="left:70px;top:444px;" width="5" height="5" viewBox="0 0 5 5"><path d="M3.400 0.800L1.200 2.500l2.200 1.700z" fill="none" stroke="#999" stroke-width="0.500"/></svg>
<svg class="b" style="left:81.5px;top:444px;" width="5" height="5" viewBox="0 0 5 5"><path d="M1.400 0.800l2.200 1.700-2.200 1.700z" fill="none" stroke="#999" stroke-width="0.500"/></svg>
<div class="b" style="left:88.5px;top:437px;width:0.8px;height:18px;background:#c8c8c8"></div>
<div class="b" style="left:89.2px;top:437.2px;width:39.4px;height:18px;background:#fff"></div>
<div class="b" style="left:89.2px;top:453.6px;width:39.4px;height:1.7px;background:#117865"></div>
<div class="t" style="left:108.6px;top:447.3px;font-size:6.1px;color:#252423;font-weight:400;transform:translate(-50%,-50%);">Page 1</div>
<div class="b" style="left:128.7px;top:437.2px;width:20.2px;height:18.1px;background:#117865"></div>
<svg class="b" style="left:135.3px;top:442.8px;" width="7" height="7" viewBox="0 0 7 7"><path d="M3.5 0.600v5.800M0.600 3.500h5.800" stroke="#fff" stroke-width="1.700"/></svg>
<div class="b" style="left:0px;top:455.4px;width:750px;height:12.6px;background:#f0f0f0;border-top:0.600px solid #dedede;box-sizing:border-box"></div>
<div class="t" style="left:2.6px;top:464.1px;font-size:6px;color:#3b3a39;font-weight:400;transform:translate(0,-50%);">Page 1 of 1</div>
<div class="t" style="left:507px;top:463.9px;font-size:6.2px;color:#3b3a39;font-weight:400;transform:translate(0,-50%);letter-spacing:0.016px;">Storage Mode: DirectQuery (click to change)</div>
<div class="t" style="left:638.5px;top:463.5px;font-size:6px;color:#3b3a39;font-weight:400;transform:translate(0,-50%);">-</div>
<div class="b" style="left:643.8px;top:462.5px;width:52.2px;height:0.6px;background:#666"></div>
<div class="b" style="left:658.8px;top:459.6px;width:1.3px;height:6.2px;background:#222"></div>
<div class="b" style="left:669.5px;top:461.8px;width:0.5px;height:1.8px;background:#666"></div>
<div class="t" style="left:698.5px;top:463.7px;font-size:6.5px;color:#3b3a39;font-weight:400;transform:translate(0,-50%);">+</div>
<div class="t" style="left:710.4px;top:463.9px;font-size:6px;color:#3b3a39;font-weight:400;transform:translate(0,-50%);">64%</div>
<svg class="b" style="left:731.5px;top:459.5px;" width="8" height="7" viewBox="0 0 8 7"><rect x="0.800" y="1" width="6.400" height="4.800" rx="0.800" fill="none" stroke="#444" stroke-width="0.800"/><rect x="2.200" y="2.200" width="3.600" height="2.400" fill="#888"/></svg>
</div></body></html>
